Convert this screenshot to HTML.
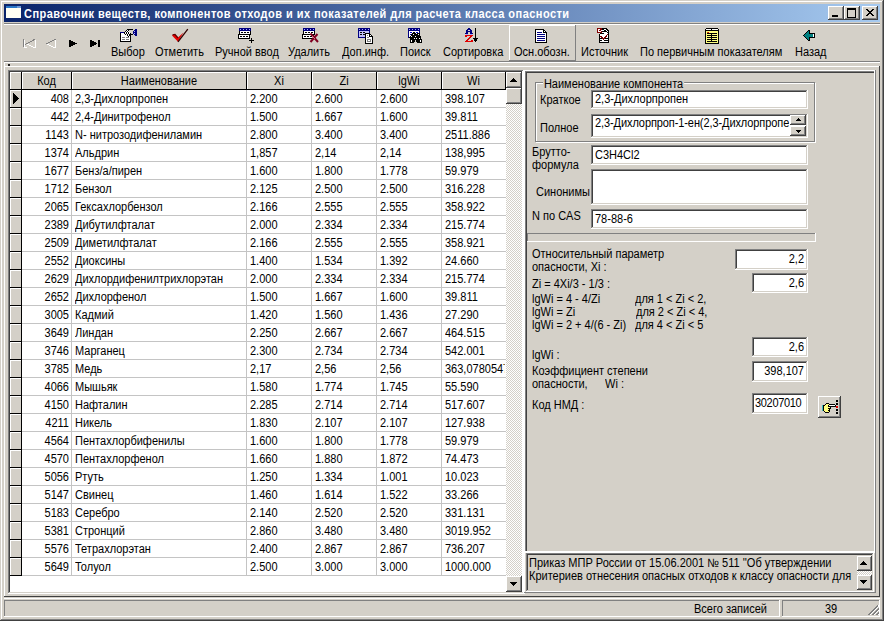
<!DOCTYPE html>
<html><head><meta charset="utf-8"><style>
html,body{margin:0;padding:0;}
body{width:884px;height:621px;position:relative;overflow:hidden;background:#D4D0C8;font-family:"Liberation Sans",sans-serif;font-size:11px;color:#000;}
body>div,body>span,body>svg{position:absolute;box-sizing:border-box;}
body>div{box-sizing:content-box;}
.t{white-space:pre;line-height:13px;height:13px;font-size:12px;transform:scaleX(0.9167);transform-origin:0 0;}
.t.r{transform-origin:100% 0;}
.t.c{transform-origin:50% 0;}
</style></head><body>
<div style="left:0px;top:0px;width:884px;height:1px;background:#D4D0C8;"></div>
<div style="left:1px;top:1px;width:882px;height:1px;background:#FFFFFF;"></div>
<div style="left:1px;top:1px;width:1px;height:619px;background:#FFFFFF;"></div>
<div style="left:882px;top:1px;width:1px;height:619px;background:#808080;"></div>
<div style="left:1px;top:619px;width:882px;height:1px;background:#808080;"></div>
<div style="left:883px;top:0px;width:1px;height:621px;background:#404040;"></div>
<div style="left:0px;top:620px;width:884px;height:1px;background:#404040;"></div>
<div style="left:4px;top:4px;width:876px;height:18px;background:linear-gradient(to right,#0A246A,#A6CAF0);"></div>
<svg style="left:6px;top:6px" width="15" height="12" viewBox="0 0 15 12" shape-rendering="crispEdges"><rect x="0" y="2" width="15" height="10" fill="#FFFFF4"/><rect x="0" y="0" width="11" height="2" fill="#2A78C8"/><rect x="11" y="0" width="4" height="2" fill="#6A9ADA"/></svg>
<span class="t" style="left:24px;top:8px;color:#fff;font-weight:bold;letter-spacing:0.50px;">Справочник веществ, компонентов отходов и их показателей для расчета класса опасности</span>
<div style="left:828px;top:6px;width:16px;height:14px;background:#D4D0C8;"></div>
<div style="left:828px;top:6px;width:16px;height:1px;background:#FFFFFF;"></div>
<div style="left:828px;top:6px;width:1px;height:14px;background:#FFFFFF;"></div>
<div style="left:828px;top:19px;width:16px;height:1px;background:#404040;"></div>
<div style="left:843px;top:6px;width:1px;height:14px;background:#404040;"></div>
<div style="left:829px;top:18px;width:14px;height:1px;background:#808080;"></div>
<div style="left:842px;top:7px;width:1px;height:12px;background:#808080;"></div>
<div style="left:844px;top:6px;width:16px;height:14px;background:#D4D0C8;"></div>
<div style="left:844px;top:6px;width:16px;height:1px;background:#FFFFFF;"></div>
<div style="left:844px;top:6px;width:1px;height:14px;background:#FFFFFF;"></div>
<div style="left:844px;top:19px;width:16px;height:1px;background:#404040;"></div>
<div style="left:859px;top:6px;width:1px;height:14px;background:#404040;"></div>
<div style="left:845px;top:18px;width:14px;height:1px;background:#808080;"></div>
<div style="left:858px;top:7px;width:1px;height:12px;background:#808080;"></div>
<div style="left:862px;top:6px;width:16px;height:14px;background:#D4D0C8;"></div>
<div style="left:862px;top:6px;width:16px;height:1px;background:#FFFFFF;"></div>
<div style="left:862px;top:6px;width:1px;height:14px;background:#FFFFFF;"></div>
<div style="left:862px;top:19px;width:16px;height:1px;background:#404040;"></div>
<div style="left:877px;top:6px;width:1px;height:14px;background:#404040;"></div>
<div style="left:863px;top:18px;width:14px;height:1px;background:#808080;"></div>
<div style="left:876px;top:7px;width:1px;height:12px;background:#808080;"></div>
<div style="left:832px;top:15px;width:6px;height:2px;background:#000;"></div>
<div style="left:847px;top:8px;width:7px;height:7px;border:1px solid #000;border-top-width:2px;"></div>
<svg style="left:866px;top:9px" width="8" height="7" viewBox="0 0 8 7" shape-rendering="crispEdges"><path d="M0 0h2v1h1v1h2v-1h1v-1h2v1h-1v1h-1v1h-1v1h1v1h1v1h1v1h-2v-1h-1v-1h-2v1h-1v1h-2v-1h1v-1h1v-1h1v-1h-1v-1h-1v-1h-1z" fill="#000"/></svg>
<div style="left:4px;top:23px;width:876px;height:1px;background:#808080;"></div>
<div style="left:4px;top:24px;width:876px;height:1px;background:#FFFFFF;"></div>
<div style="left:4px;top:61px;width:876px;height:1px;background:#808080;"></div>
<div style="left:4px;top:62px;width:876px;height:1px;background:#FFFFFF;"></div>
<div style="left:509px;top:25px;width:67px;height:36px;background:#D4D0C8;"></div>
<div style="left:509px;top:25px;width:67px;height:1px;background:#FFFFFF;"></div>
<div style="left:509px;top:25px;width:1px;height:36px;background:#FFFFFF;"></div>
<div style="left:509px;top:60px;width:67px;height:1px;background:#808080;"></div>
<div style="left:575px;top:25px;width:1px;height:36px;background:#808080;"></div>
<span class="t" style="left:111px;top:46px;">Выбор</span>
<span class="t" style="left:155px;top:46px;">Отметить</span>
<span class="t" style="left:215px;top:46px;">Ручной ввод</span>
<span class="t" style="left:288px;top:46px;">Удалить</span>
<span class="t" style="left:342px;top:46px;">Доп.инф.</span>
<span class="t" style="left:400px;top:46px;">Поиск</span>
<span class="t" style="left:443px;top:46px;">Сортировка</span>
<span class="t" style="left:514px;top:46px;">Осн.обозн.</span>
<span class="t" style="left:581px;top:46px;">Источник</span>
<span class="t" style="left:640px;top:46px;">По первичным показателям</span>
<span class="t" style="left:795px;top:46px;">Назад</span>
<svg style="left:23px;top:39px" width="13" height="9" viewBox="0 0 13 9" shape-rendering="crispEdges"><rect x="0" y="0" width="1" height="1" fill="#808080"/><rect x="10" y="0" width="2" height="1" fill="#808080"/><rect x="0" y="1" width="1" height="1" fill="#808080"/><rect x="1" y="1" width="1" height="1" fill="#FFFFFF"/><rect x="9" y="1" width="2" height="1" fill="#808080"/><rect x="12" y="1" width="1" height="1" fill="#FFFFFF"/><rect x="0" y="2" width="1" height="1" fill="#808080"/><rect x="1" y="2" width="1" height="1" fill="#FFFFFF"/><rect x="7" y="2" width="2" height="1" fill="#808080"/><rect x="12" y="2" width="1" height="1" fill="#FFFFFF"/><rect x="0" y="3" width="1" height="1" fill="#808080"/><rect x="1" y="3" width="1" height="1" fill="#FFFFFF"/><rect x="5" y="3" width="2" height="1" fill="#808080"/><rect x="12" y="3" width="1" height="1" fill="#FFFFFF"/><rect x="0" y="4" width="1" height="1" fill="#808080"/><rect x="1" y="4" width="1" height="1" fill="#FFFFFF"/><rect x="3" y="4" width="2" height="1" fill="#808080"/><rect x="12" y="4" width="1" height="1" fill="#FFFFFF"/><rect x="0" y="5" width="1" height="1" fill="#808080"/><rect x="1" y="5" width="1" height="1" fill="#FFFFFF"/><rect x="2" y="5" width="1" height="1" fill="#808080"/><rect x="4" y="5" width="2" height="1" fill="#FFFFFF"/><rect x="12" y="5" width="1" height="1" fill="#FFFFFF"/><rect x="0" y="6" width="1" height="1" fill="#808080"/><rect x="1" y="6" width="1" height="1" fill="#FFFFFF"/><rect x="6" y="6" width="2" height="1" fill="#FFFFFF"/><rect x="12" y="6" width="1" height="1" fill="#FFFFFF"/><rect x="0" y="7" width="1" height="1" fill="#808080"/><rect x="1" y="7" width="1" height="1" fill="#FFFFFF"/><rect x="8" y="7" width="2" height="1" fill="#FFFFFF"/><rect x="12" y="7" width="1" height="1" fill="#FFFFFF"/><rect x="1" y="8" width="3" height="1" fill="#FFFFFF"/><rect x="10" y="8" width="3" height="1" fill="#FFFFFF"/></svg>
<svg style="left:46px;top:39px" width="10" height="9" viewBox="0 0 10 9" shape-rendering="crispEdges"><rect x="8" y="0" width="2" height="1" fill="#808080"/><rect x="6" y="1" width="2" height="1" fill="#808080"/><rect x="9" y="1" width="1" height="1" fill="#FFFFFF"/><rect x="4" y="2" width="2" height="1" fill="#808080"/><rect x="9" y="2" width="1" height="1" fill="#FFFFFF"/><rect x="2" y="3" width="2" height="1" fill="#808080"/><rect x="9" y="3" width="1" height="1" fill="#FFFFFF"/><rect x="0" y="4" width="2" height="1" fill="#808080"/><rect x="9" y="4" width="1" height="1" fill="#FFFFFF"/><rect x="1" y="5" width="2" height="1" fill="#FFFFFF"/><rect x="9" y="5" width="1" height="1" fill="#FFFFFF"/><rect x="3" y="6" width="2" height="1" fill="#FFFFFF"/><rect x="9" y="6" width="1" height="1" fill="#FFFFFF"/><rect x="5" y="7" width="2" height="1" fill="#FFFFFF"/><rect x="9" y="7" width="1" height="1" fill="#FFFFFF"/><rect x="7" y="8" width="3" height="1" fill="#FFFFFF"/></svg>
<svg style="left:69px;top:40px" width="8" height="7" viewBox="0 0 8 7" shape-rendering="crispEdges"><rect x="0" y="0" width="2" height="1" fill="#000000"/><rect x="0" y="1" width="4" height="1" fill="#000000"/><rect x="0" y="2" width="6" height="1" fill="#000000"/><rect x="0" y="3" width="8" height="1" fill="#000000"/><rect x="0" y="4" width="6" height="1" fill="#000000"/><rect x="0" y="5" width="4" height="1" fill="#000000"/><rect x="0" y="6" width="2" height="1" fill="#000000"/></svg>
<svg style="left:90px;top:40px" width="10" height="7" viewBox="0 0 10 7" shape-rendering="crispEdges"><rect x="0" y="0" width="2" height="1" fill="#000000"/><rect x="8" y="0" width="2" height="1" fill="#000000"/><rect x="0" y="1" width="4" height="1" fill="#000000"/><rect x="8" y="1" width="2" height="1" fill="#000000"/><rect x="0" y="2" width="6" height="1" fill="#000000"/><rect x="8" y="2" width="2" height="1" fill="#000000"/><rect x="0" y="3" width="7" height="1" fill="#000000"/><rect x="8" y="3" width="2" height="1" fill="#000000"/><rect x="0" y="4" width="6" height="1" fill="#000000"/><rect x="8" y="4" width="2" height="1" fill="#000000"/><rect x="0" y="5" width="4" height="1" fill="#000000"/><rect x="8" y="5" width="2" height="1" fill="#000000"/><rect x="0" y="6" width="2" height="1" fill="#000000"/><rect x="8" y="6" width="2" height="1" fill="#000000"/></svg>
<svg style="left:120px;top:29px" width="17" height="13" viewBox="0 0 17 13" shape-rendering="crispEdges"><rect x="7" y="0" width="6" height="1" fill="#000000"/><rect x="15" y="0" width="2" height="1" fill="#000080"/><rect x="6" y="1" width="1" height="1" fill="#000000"/><rect x="7" y="1" width="1" height="1" fill="#FFFFFF"/><rect x="8" y="1" width="1" height="1" fill="#000000"/><rect x="14" y="1" width="3" height="1" fill="#000080"/><rect x="5" y="2" width="1" height="1" fill="#000000"/><rect x="6" y="2" width="1" height="1" fill="#FFFFFF"/><rect x="7" y="2" width="1" height="1" fill="#000000"/><rect x="8" y="2" width="1" height="1" fill="#FFFFFF"/><rect x="13" y="2" width="1" height="1" fill="#000080"/><rect x="14" y="2" width="1" height="1" fill="#A8A8FF"/><rect x="15" y="2" width="2" height="1" fill="#000080"/><rect x="0" y="3" width="4" height="1" fill="#000080"/><rect x="4" y="3" width="1" height="1" fill="#000000"/><rect x="5" y="3" width="1" height="1" fill="#FFFFFF"/><rect x="6" y="3" width="1" height="1" fill="#000000"/><rect x="7" y="3" width="1" height="1" fill="#FFFFFF"/><rect x="8" y="3" width="1" height="1" fill="#000000"/><rect x="9" y="3" width="1" height="1" fill="#FFFFFF"/><rect x="13" y="3" width="4" height="1" fill="#000080"/><rect x="0" y="4" width="1" height="1" fill="#000000"/><rect x="1" y="4" width="3" height="1" fill="#FFFFFF"/><rect x="4" y="4" width="1" height="1" fill="#000000"/><rect x="5" y="4" width="1" height="1" fill="#FFFFFF"/><rect x="6" y="4" width="1" height="1" fill="#000000"/><rect x="7" y="4" width="1" height="1" fill="#FFFFFF"/><rect x="8" y="4" width="1" height="1" fill="#000000"/><rect x="9" y="4" width="1" height="1" fill="#FFFFFF"/><rect x="10" y="4" width="1" height="1" fill="#000000"/><rect x="13" y="4" width="1" height="1" fill="#000080"/><rect x="14" y="4" width="1" height="1" fill="#A8A8FF"/><rect x="15" y="4" width="2" height="1" fill="#000080"/><rect x="0" y="5" width="1" height="1" fill="#000000"/><rect x="1" y="5" width="4" height="1" fill="#FFFFFF"/><rect x="5" y="5" width="1" height="1" fill="#000000"/><rect x="6" y="5" width="1" height="1" fill="#FFFFFF"/><rect x="7" y="5" width="1" height="1" fill="#000000"/><rect x="8" y="5" width="1" height="1" fill="#FFFFFF"/><rect x="9" y="5" width="4" height="1" fill="#000000"/><rect x="14" y="5" width="3" height="1" fill="#000080"/><rect x="0" y="6" width="1" height="1" fill="#000000"/><rect x="1" y="6" width="6" height="1" fill="#FFFFFF"/><rect x="7" y="6" width="1" height="1" fill="#000000"/><rect x="8" y="6" width="1" height="1" fill="#FFFFFF"/><rect x="9" y="6" width="2" height="1" fill="#000000"/><rect x="15" y="6" width="2" height="1" fill="#000080"/><rect x="0" y="7" width="1" height="1" fill="#000000"/><rect x="1" y="7" width="7" height="1" fill="#FFFFFF"/><rect x="8" y="7" width="1" height="1" fill="#000000"/><rect x="9" y="7" width="1" height="1" fill="#FFFFFF"/><rect x="10" y="7" width="1" height="1" fill="#000000"/><rect x="0" y="8" width="1" height="1" fill="#000000"/><rect x="1" y="8" width="1" height="1" fill="#FFFFFF"/><rect x="2" y="8" width="3" height="1" fill="#808080"/><rect x="5" y="8" width="1" height="1" fill="#FFFFFF"/><rect x="6" y="8" width="3" height="1" fill="#808080"/><rect x="9" y="8" width="1" height="1" fill="#FFFFFF"/><rect x="10" y="8" width="1" height="1" fill="#000000"/><rect x="0" y="9" width="1" height="1" fill="#000000"/><rect x="1" y="9" width="9" height="1" fill="#FFFFFF"/><rect x="10" y="9" width="1" height="1" fill="#000000"/><rect x="0" y="10" width="1" height="1" fill="#000000"/><rect x="1" y="10" width="1" height="1" fill="#FFFFFF"/><rect x="2" y="10" width="3" height="1" fill="#808080"/><rect x="5" y="10" width="1" height="1" fill="#FFFFFF"/><rect x="6" y="10" width="3" height="1" fill="#808080"/><rect x="9" y="10" width="1" height="1" fill="#FFFFFF"/><rect x="10" y="10" width="1" height="1" fill="#000000"/><rect x="0" y="11" width="1" height="1" fill="#000000"/><rect x="1" y="11" width="9" height="1" fill="#FFFFFF"/><rect x="10" y="11" width="1" height="1" fill="#000000"/><rect x="0" y="12" width="11" height="1" fill="#000000"/></svg>
<svg style="left:171px;top:28px" width="18" height="15" viewBox="0 0 18 15" shape-rendering="crispEdges"><path d="M1 7.5 L3.5 6 L7 9.5 L12.5 4.5 L7 13.8 Z" fill="#E80000" shape-rendering="geometricPrecision"/><path d="M1.5 6.8 L4 6.5 L7 10" stroke="#600000" stroke-width="1.2" fill="none" shape-rendering="geometricPrecision"/><path d="M7 13.8 L16.8 1.2" stroke="#300000" stroke-width="1.3" fill="none" shape-rendering="geometricPrecision"/></svg>
<svg style="left:238px;top:28px" width="17" height="15" viewBox="0 0 17 15" shape-rendering="crispEdges"><rect x="1" y="0" width="12" height="1" fill="#000080"/><rect x="1" y="1" width="1" height="1" fill="#000080"/><rect x="2" y="1" width="1" height="1" fill="#A8A8FF"/><rect x="3" y="1" width="2" height="1" fill="#000080"/><rect x="5" y="1" width="1" height="1" fill="#A8A8FF"/><rect x="6" y="1" width="2" height="1" fill="#000080"/><rect x="8" y="1" width="1" height="1" fill="#A8A8FF"/><rect x="9" y="1" width="2" height="1" fill="#000080"/><rect x="11" y="1" width="1" height="1" fill="#A8A8FF"/><rect x="12" y="1" width="1" height="1" fill="#000080"/><rect x="1" y="2" width="12" height="1" fill="#000080"/><rect x="1" y="3" width="1" height="1" fill="#000000"/><rect x="2" y="3" width="10" height="1" fill="#FFFFFF"/><rect x="12" y="3" width="1" height="1" fill="#000000"/><rect x="1" y="4" width="1" height="1" fill="#000000"/><rect x="2" y="4" width="1" height="1" fill="#FFFFFF"/><rect x="3" y="4" width="2" height="1" fill="#000000"/><rect x="5" y="4" width="1" height="1" fill="#FFFFFF"/><rect x="6" y="4" width="2" height="1" fill="#000000"/><rect x="8" y="4" width="1" height="1" fill="#FFFFFF"/><rect x="9" y="4" width="2" height="1" fill="#000000"/><rect x="11" y="4" width="1" height="1" fill="#FFFFFF"/><rect x="12" y="4" width="1" height="1" fill="#000000"/><rect x="1" y="5" width="1" height="1" fill="#000000"/><rect x="2" y="5" width="10" height="1" fill="#FFFFFF"/><rect x="12" y="5" width="1" height="1" fill="#000000"/><rect x="0" y="6" width="13" height="1" fill="#000000"/><rect x="0" y="7" width="1" height="1" fill="#000000"/><rect x="1" y="7" width="10" height="1" fill="#FFFFFF"/><rect x="11" y="7" width="1" height="1" fill="#000000"/><rect x="0" y="8" width="1" height="1" fill="#000000"/><rect x="1" y="8" width="1" height="1" fill="#FFFFFF"/><rect x="2" y="8" width="2" height="1" fill="#000000"/><rect x="4" y="8" width="1" height="1" fill="#FFFFFF"/><rect x="5" y="8" width="2" height="1" fill="#000000"/><rect x="7" y="8" width="1" height="1" fill="#FFFFFF"/><rect x="8" y="8" width="2" height="1" fill="#000000"/><rect x="10" y="8" width="1" height="1" fill="#FFFFFF"/><rect x="11" y="8" width="1" height="1" fill="#000000"/><rect x="0" y="9" width="1" height="1" fill="#000000"/><rect x="1" y="9" width="10" height="1" fill="#FFFFFF"/><rect x="11" y="9" width="1" height="1" fill="#000000"/><rect x="0" y="10" width="12" height="1" fill="#000000"/><rect x="13" y="11" width="1" height="1" fill="#000000"/><rect x="11" y="12" width="5" height="1" fill="#000000"/><rect x="13" y="13" width="1" height="1" fill="#000000"/><rect x="13" y="14" width="1" height="1" fill="#000000"/></svg>
<svg style="left:238px;top:38px" width="17" height="1" viewBox="0 0 17 1" shape-rendering="crispEdges"><rect x="13" y="0" width="1" height="1" fill="#000000"/></svg>
<svg style="left:302px;top:28px" width="17" height="11" viewBox="0 0 17 11" shape-rendering="crispEdges"><rect x="1" y="0" width="12" height="1" fill="#000080"/><rect x="1" y="1" width="1" height="1" fill="#000080"/><rect x="2" y="1" width="1" height="1" fill="#A8A8FF"/><rect x="3" y="1" width="2" height="1" fill="#000080"/><rect x="5" y="1" width="1" height="1" fill="#A8A8FF"/><rect x="6" y="1" width="2" height="1" fill="#000080"/><rect x="8" y="1" width="1" height="1" fill="#A8A8FF"/><rect x="9" y="1" width="2" height="1" fill="#000080"/><rect x="11" y="1" width="1" height="1" fill="#A8A8FF"/><rect x="12" y="1" width="1" height="1" fill="#000080"/><rect x="1" y="2" width="12" height="1" fill="#000080"/><rect x="1" y="3" width="1" height="1" fill="#000000"/><rect x="2" y="3" width="10" height="1" fill="#FFFFFF"/><rect x="12" y="3" width="1" height="1" fill="#000000"/><rect x="1" y="4" width="1" height="1" fill="#000000"/><rect x="2" y="4" width="1" height="1" fill="#FFFFFF"/><rect x="3" y="4" width="2" height="1" fill="#000000"/><rect x="5" y="4" width="1" height="1" fill="#FFFFFF"/><rect x="6" y="4" width="2" height="1" fill="#000000"/><rect x="8" y="4" width="1" height="1" fill="#FFFFFF"/><rect x="9" y="4" width="2" height="1" fill="#000000"/><rect x="11" y="4" width="1" height="1" fill="#FFFFFF"/><rect x="12" y="4" width="1" height="1" fill="#000000"/><rect x="1" y="5" width="1" height="1" fill="#000000"/><rect x="2" y="5" width="10" height="1" fill="#FFFFFF"/><rect x="12" y="5" width="1" height="1" fill="#000000"/><rect x="0" y="6" width="13" height="1" fill="#000000"/><rect x="0" y="7" width="1" height="1" fill="#000000"/><rect x="1" y="7" width="10" height="1" fill="#FFFFFF"/><rect x="11" y="7" width="1" height="1" fill="#000000"/><rect x="0" y="8" width="1" height="1" fill="#000000"/><rect x="1" y="8" width="1" height="1" fill="#FFFFFF"/><rect x="2" y="8" width="2" height="1" fill="#000000"/><rect x="4" y="8" width="1" height="1" fill="#FFFFFF"/><rect x="5" y="8" width="2" height="1" fill="#000000"/><rect x="7" y="8" width="1" height="1" fill="#FFFFFF"/><rect x="8" y="8" width="2" height="1" fill="#000000"/><rect x="10" y="8" width="1" height="1" fill="#FFFFFF"/><rect x="11" y="8" width="1" height="1" fill="#000000"/><rect x="0" y="9" width="1" height="1" fill="#000000"/><rect x="1" y="9" width="10" height="1" fill="#FFFFFF"/><rect x="11" y="9" width="1" height="1" fill="#000000"/><rect x="0" y="10" width="12" height="1" fill="#000000"/></svg>
<svg style="left:302px;top:28px" width="18" height="16" viewBox="0 0 18 16" shape-rendering="crispEdges"><path d="M8.5 5.5 L16 14 M15.5 6 L8.5 14" stroke="#800020" stroke-width="2" fill="none" shape-rendering="geometricPrecision"/><path d="M10 8 L13 11" stroke="#FF80A0" stroke-width="0.8" shape-rendering="geometricPrecision"/></svg>
<svg style="left:358px;top:28px" width="17" height="16" viewBox="0 0 17 16" shape-rendering="crispEdges"><rect x="0" y="0" width="12" height="1" fill="#000080"/><rect x="0" y="1" width="1" height="1" fill="#000080"/><rect x="1" y="1" width="1" height="1" fill="#A8A8FF"/><rect x="2" y="1" width="2" height="1" fill="#000080"/><rect x="4" y="1" width="1" height="1" fill="#A8A8FF"/><rect x="5" y="1" width="2" height="1" fill="#000080"/><rect x="7" y="1" width="1" height="1" fill="#A8A8FF"/><rect x="8" y="1" width="2" height="1" fill="#000080"/><rect x="10" y="1" width="1" height="1" fill="#A8A8FF"/><rect x="11" y="1" width="1" height="1" fill="#000080"/><rect x="0" y="2" width="12" height="1" fill="#000080"/><rect x="0" y="3" width="1" height="1" fill="#000080"/><rect x="1" y="3" width="10" height="1" fill="#C0C0F8"/><rect x="11" y="3" width="1" height="1" fill="#000080"/><rect x="0" y="4" width="1" height="1" fill="#000080"/><rect x="1" y="4" width="1" height="1" fill="#C0C0F8"/><rect x="2" y="4" width="2" height="1" fill="#000000"/><rect x="4" y="4" width="1" height="1" fill="#C0C0F8"/><rect x="5" y="4" width="2" height="1" fill="#000000"/><rect x="7" y="4" width="4" height="1" fill="#C0C0F8"/><rect x="11" y="4" width="1" height="1" fill="#000080"/><rect x="0" y="5" width="1" height="1" fill="#000080"/><rect x="1" y="5" width="6" height="1" fill="#C0C0F8"/><rect x="7" y="5" width="5" height="1" fill="#000000"/><rect x="0" y="6" width="1" height="1" fill="#000080"/><rect x="1" y="6" width="1" height="1" fill="#C0C0F8"/><rect x="2" y="6" width="2" height="1" fill="#000000"/><rect x="4" y="6" width="1" height="1" fill="#C0C0F8"/><rect x="5" y="6" width="3" height="1" fill="#000000"/><rect x="8" y="6" width="3" height="1" fill="#FFFFFF"/><rect x="11" y="6" width="2" height="1" fill="#000000"/><rect x="0" y="7" width="1" height="1" fill="#000080"/><rect x="1" y="7" width="6" height="1" fill="#C0C0F8"/><rect x="7" y="7" width="1" height="1" fill="#000000"/><rect x="8" y="7" width="1" height="1" fill="#FFFFFF"/><rect x="9" y="7" width="1" height="1" fill="#808080"/><rect x="10" y="7" width="1" height="1" fill="#FFFFFF"/><rect x="11" y="7" width="1" height="1" fill="#000000"/><rect x="12" y="7" width="1" height="1" fill="#FFFFFF"/><rect x="13" y="7" width="1" height="1" fill="#000000"/><rect x="0" y="8" width="1" height="1" fill="#000080"/><rect x="1" y="8" width="6" height="1" fill="#C0C0F8"/><rect x="7" y="8" width="1" height="1" fill="#000000"/><rect x="8" y="8" width="3" height="1" fill="#FFFFFF"/><rect x="11" y="8" width="4" height="1" fill="#000000"/><rect x="0" y="9" width="7" height="1" fill="#000080"/><rect x="7" y="9" width="1" height="1" fill="#000000"/><rect x="8" y="9" width="1" height="1" fill="#FFFFFF"/><rect x="9" y="9" width="2" height="1" fill="#808080"/><rect x="11" y="9" width="3" height="1" fill="#FFFFFF"/><rect x="14" y="9" width="1" height="1" fill="#000000"/><rect x="7" y="10" width="1" height="1" fill="#000000"/><rect x="8" y="10" width="6" height="1" fill="#FFFFFF"/><rect x="14" y="10" width="1" height="1" fill="#000000"/><rect x="7" y="11" width="1" height="1" fill="#000000"/><rect x="8" y="11" width="1" height="1" fill="#FFFFFF"/><rect x="9" y="11" width="4" height="1" fill="#808080"/><rect x="13" y="11" width="1" height="1" fill="#FFFFFF"/><rect x="14" y="11" width="1" height="1" fill="#000000"/><rect x="7" y="12" width="1" height="1" fill="#000000"/><rect x="8" y="12" width="1" height="1" fill="#FFFFFF"/><rect x="9" y="12" width="1" height="1" fill="#808080"/><rect x="10" y="12" width="2" height="1" fill="#FFFFFF"/><rect x="12" y="12" width="1" height="1" fill="#808080"/><rect x="13" y="12" width="1" height="1" fill="#FFFFFF"/><rect x="14" y="12" width="1" height="1" fill="#000000"/><rect x="7" y="13" width="1" height="1" fill="#000000"/><rect x="8" y="13" width="1" height="1" fill="#FFFFFF"/><rect x="9" y="13" width="4" height="1" fill="#808080"/><rect x="13" y="13" width="1" height="1" fill="#FFFFFF"/><rect x="14" y="13" width="1" height="1" fill="#000000"/><rect x="7" y="14" width="1" height="1" fill="#000000"/><rect x="8" y="14" width="6" height="1" fill="#FFFFFF"/><rect x="14" y="14" width="1" height="1" fill="#000000"/><rect x="7" y="15" width="8" height="1" fill="#000000"/></svg>
<svg style="left:408px;top:28px" width="17" height="15" viewBox="0 0 17 15" shape-rendering="crispEdges"><rect x="0" y="0" width="12" height="1" fill="#000080"/><rect x="0" y="1" width="1" height="1" fill="#000080"/><rect x="1" y="1" width="1" height="1" fill="#A8A8FF"/><rect x="2" y="1" width="2" height="1" fill="#000080"/><rect x="4" y="1" width="1" height="1" fill="#A8A8FF"/><rect x="5" y="1" width="2" height="1" fill="#000080"/><rect x="7" y="1" width="1" height="1" fill="#A8A8FF"/><rect x="8" y="1" width="2" height="1" fill="#000080"/><rect x="10" y="1" width="1" height="1" fill="#A8A8FF"/><rect x="11" y="1" width="1" height="1" fill="#000080"/><rect x="0" y="2" width="12" height="1" fill="#000080"/><rect x="0" y="3" width="1" height="1" fill="#000080"/><rect x="1" y="3" width="10" height="1" fill="#FFFFFF"/><rect x="11" y="3" width="1" height="1" fill="#000080"/><rect x="0" y="4" width="1" height="1" fill="#000080"/><rect x="1" y="4" width="1" height="1" fill="#FFFFFF"/><rect x="2" y="4" width="2" height="1" fill="#0000C0"/><rect x="4" y="4" width="1" height="1" fill="#FFFFFF"/><rect x="5" y="4" width="2" height="1" fill="#000000"/><rect x="7" y="4" width="1" height="1" fill="#FFFFFF"/><rect x="8" y="4" width="2" height="1" fill="#0000C0"/><rect x="10" y="4" width="1" height="1" fill="#FFFFFF"/><rect x="11" y="4" width="1" height="1" fill="#000080"/><rect x="0" y="5" width="1" height="1" fill="#000080"/><rect x="1" y="5" width="3" height="1" fill="#FFFFFF"/><rect x="4" y="5" width="4" height="1" fill="#000000"/><rect x="8" y="5" width="1" height="1" fill="#FFFFFF"/><rect x="9" y="5" width="3" height="1" fill="#000000"/><rect x="0" y="6" width="1" height="1" fill="#000080"/><rect x="1" y="6" width="1" height="1" fill="#FFFFFF"/><rect x="2" y="6" width="1" height="1" fill="#0000C0"/><rect x="3" y="6" width="2" height="1" fill="#000000"/><rect x="5" y="6" width="1" height="1" fill="#FFFFFF"/><rect x="6" y="6" width="4" height="1" fill="#000000"/><rect x="10" y="6" width="1" height="1" fill="#FFFFFF"/><rect x="11" y="6" width="1" height="1" fill="#000000"/><rect x="0" y="7" width="1" height="1" fill="#000080"/><rect x="1" y="7" width="2" height="1" fill="#FFFFFF"/><rect x="3" y="7" width="9" height="1" fill="#000000"/><rect x="0" y="8" width="1" height="1" fill="#000080"/><rect x="1" y="8" width="1" height="1" fill="#FFFFFF"/><rect x="2" y="8" width="1" height="1" fill="#000000"/><rect x="3" y="8" width="1" height="1" fill="#FFFFFF"/><rect x="4" y="8" width="3" height="1" fill="#000000"/><rect x="7" y="8" width="1" height="1" fill="#FFFFFF"/><rect x="8" y="8" width="5" height="1" fill="#000000"/><rect x="0" y="9" width="1" height="1" fill="#000080"/><rect x="1" y="9" width="12" height="1" fill="#000000"/><rect x="2" y="10" width="4" height="1" fill="#000000"/><rect x="6" y="10" width="1" height="1" fill="#FFFFFF"/><rect x="7" y="10" width="1" height="1" fill="#000000"/><rect x="8" y="10" width="1" height="1" fill="#FFFFFF"/><rect x="9" y="10" width="2" height="1" fill="#000000"/><rect x="11" y="10" width="1" height="1" fill="#FFFFFF"/><rect x="12" y="10" width="1" height="1" fill="#000000"/><rect x="2" y="11" width="12" height="1" fill="#000000"/><rect x="2" y="12" width="1" height="1" fill="#000000"/><rect x="3" y="12" width="1" height="1" fill="#FFFFFF"/><rect x="4" y="12" width="3" height="1" fill="#000000"/><rect x="8" y="12" width="4" height="1" fill="#000000"/><rect x="12" y="12" width="1" height="1" fill="#FFFFFF"/><rect x="13" y="12" width="1" height="1" fill="#000000"/><rect x="2" y="13" width="1" height="1" fill="#000000"/><rect x="3" y="13" width="1" height="1" fill="#FFFFFF"/><rect x="4" y="13" width="3" height="1" fill="#000000"/><rect x="8" y="13" width="4" height="1" fill="#000000"/><rect x="12" y="13" width="1" height="1" fill="#FFFFFF"/><rect x="13" y="13" width="1" height="1" fill="#000000"/><rect x="2" y="14" width="4" height="1" fill="#000000"/><rect x="9" y="14" width="5" height="1" fill="#000000"/></svg>
<svg style="left:465px;top:28px" width="13" height="14" viewBox="0 0 13 14" shape-rendering="crispEdges"><rect x="3" y="0" width="2" height="1" fill="#000080"/><rect x="10" y="0" width="1" height="1" fill="#000000"/><rect x="2" y="1" width="4" height="1" fill="#000080"/><rect x="10" y="1" width="1" height="1" fill="#000000"/><rect x="1" y="2" width="2" height="1" fill="#000080"/><rect x="5" y="2" width="2" height="1" fill="#000080"/><rect x="10" y="2" width="1" height="1" fill="#000000"/><rect x="1" y="3" width="6" height="1" fill="#000080"/><rect x="10" y="3" width="1" height="1" fill="#000000"/><rect x="1" y="4" width="2" height="1" fill="#000080"/><rect x="5" y="4" width="2" height="1" fill="#000080"/><rect x="10" y="4" width="1" height="1" fill="#000000"/><rect x="0" y="5" width="3" height="1" fill="#000080"/><rect x="5" y="5" width="3" height="1" fill="#000080"/><rect x="10" y="5" width="1" height="1" fill="#000000"/><rect x="1" y="6" width="2" height="1" fill="#A8A8FF"/><rect x="5" y="6" width="2" height="1" fill="#A8A8FF"/><rect x="10" y="6" width="1" height="1" fill="#000000"/><rect x="0" y="7" width="8" height="1" fill="#E00000"/><rect x="10" y="7" width="1" height="1" fill="#000000"/><rect x="0" y="8" width="2" height="1" fill="#E00000"/><rect x="5" y="8" width="2" height="1" fill="#E00000"/><rect x="10" y="8" width="1" height="1" fill="#000000"/><rect x="4" y="9" width="2" height="1" fill="#E00000"/><rect x="10" y="9" width="1" height="1" fill="#000000"/><rect x="3" y="10" width="2" height="1" fill="#E00000"/><rect x="8" y="10" width="5" height="1" fill="#000000"/><rect x="2" y="11" width="2" height="1" fill="#E00000"/><rect x="9" y="11" width="3" height="1" fill="#000000"/><rect x="1" y="12" width="2" height="1" fill="#E00000"/><rect x="6" y="12" width="2" height="1" fill="#E00000"/><rect x="9" y="12" width="3" height="1" fill="#000000"/><rect x="0" y="13" width="8" height="1" fill="#E00000"/><rect x="10" y="13" width="1" height="1" fill="#000000"/></svg>
<svg style="left:535px;top:29px" width="13" height="14" viewBox="0 0 13 14" shape-rendering="crispEdges"><rect x="0" y="0" width="9" height="1" fill="#000000"/><rect x="0" y="1" width="1" height="1" fill="#000000"/><rect x="1" y="1" width="7" height="1" fill="#FFFFFF"/><rect x="8" y="1" width="2" height="1" fill="#000000"/><rect x="0" y="2" width="1" height="1" fill="#000000"/><rect x="1" y="2" width="7" height="1" fill="#FFFFFF"/><rect x="8" y="2" width="1" height="1" fill="#000000"/><rect x="9" y="2" width="1" height="1" fill="#FFFFFF"/><rect x="10" y="2" width="1" height="1" fill="#000000"/><rect x="0" y="3" width="1" height="1" fill="#000000"/><rect x="1" y="3" width="1" height="1" fill="#FFFFFF"/><rect x="2" y="3" width="5" height="1" fill="#000080"/><rect x="7" y="3" width="1" height="1" fill="#FFFFFF"/><rect x="8" y="3" width="4" height="1" fill="#000000"/><rect x="0" y="4" width="1" height="1" fill="#000000"/><rect x="1" y="4" width="10" height="1" fill="#FFFFFF"/><rect x="11" y="4" width="1" height="1" fill="#000000"/><rect x="0" y="5" width="1" height="1" fill="#000000"/><rect x="1" y="5" width="1" height="1" fill="#FFFFFF"/><rect x="2" y="5" width="8" height="1" fill="#000080"/><rect x="10" y="5" width="1" height="1" fill="#FFFFFF"/><rect x="11" y="5" width="1" height="1" fill="#000000"/><rect x="0" y="6" width="1" height="1" fill="#000000"/><rect x="1" y="6" width="10" height="1" fill="#FFFFFF"/><rect x="11" y="6" width="1" height="1" fill="#000000"/><rect x="0" y="7" width="1" height="1" fill="#000000"/><rect x="1" y="7" width="1" height="1" fill="#FFFFFF"/><rect x="2" y="7" width="8" height="1" fill="#000080"/><rect x="10" y="7" width="1" height="1" fill="#FFFFFF"/><rect x="11" y="7" width="1" height="1" fill="#000000"/><rect x="0" y="8" width="1" height="1" fill="#000000"/><rect x="1" y="8" width="10" height="1" fill="#FFFFFF"/><rect x="11" y="8" width="1" height="1" fill="#000000"/><rect x="0" y="9" width="1" height="1" fill="#000000"/><rect x="1" y="9" width="1" height="1" fill="#FFFFFF"/><rect x="2" y="9" width="8" height="1" fill="#000080"/><rect x="10" y="9" width="1" height="1" fill="#FFFFFF"/><rect x="11" y="9" width="1" height="1" fill="#000000"/><rect x="0" y="10" width="1" height="1" fill="#000000"/><rect x="1" y="10" width="10" height="1" fill="#FFFFFF"/><rect x="11" y="10" width="1" height="1" fill="#000000"/><rect x="0" y="11" width="1" height="1" fill="#000000"/><rect x="1" y="11" width="1" height="1" fill="#FFFFFF"/><rect x="2" y="11" width="8" height="1" fill="#000080"/><rect x="10" y="11" width="1" height="1" fill="#FFFFFF"/><rect x="11" y="11" width="1" height="1" fill="#000000"/><rect x="0" y="12" width="1" height="1" fill="#000000"/><rect x="1" y="12" width="10" height="1" fill="#FFFFFF"/><rect x="11" y="12" width="1" height="1" fill="#000000"/><rect x="0" y="13" width="12" height="1" fill="#000000"/></svg>
<svg style="left:597px;top:28px" width="15" height="15" viewBox="0 0 15 15" shape-rendering="crispEdges"><rect x="0" y="0" width="5" height="1" fill="#800000"/><rect x="5" y="0" width="5" height="1" fill="#000000"/><rect x="0" y="1" width="1" height="1" fill="#800000"/><rect x="1" y="1" width="2" height="1" fill="#FFFFFF"/><rect x="3" y="1" width="2" height="1" fill="#800000"/><rect x="5" y="1" width="2" height="1" fill="#000000"/><rect x="7" y="1" width="2" height="1" fill="#FFFFFF"/><rect x="9" y="1" width="2" height="1" fill="#000000"/><rect x="0" y="2" width="1" height="1" fill="#800000"/><rect x="1" y="2" width="1" height="1" fill="#FFFFFF"/><rect x="2" y="2" width="2" height="1" fill="#800000"/><rect x="4" y="2" width="3" height="1" fill="#FFFFFF"/><rect x="7" y="2" width="2" height="1" fill="#000000"/><rect x="9" y="2" width="1" height="1" fill="#FFFFFF"/><rect x="10" y="2" width="2" height="1" fill="#000000"/><rect x="0" y="3" width="1" height="1" fill="#800000"/><rect x="1" y="3" width="3" height="1" fill="#FFFFFF"/><rect x="4" y="3" width="1" height="1" fill="#800000"/><rect x="5" y="3" width="5" height="1" fill="#000000"/><rect x="10" y="3" width="1" height="1" fill="#FFFFFF"/><rect x="11" y="3" width="1" height="1" fill="#000000"/><rect x="0" y="4" width="5" height="1" fill="#800000"/><rect x="5" y="4" width="5" height="1" fill="#FFFFFF"/><rect x="10" y="4" width="2" height="1" fill="#000000"/><rect x="3" y="5" width="4" height="1" fill="#000000"/><rect x="7" y="5" width="4" height="1" fill="#FFFFFF"/><rect x="11" y="5" width="1" height="1" fill="#000000"/><rect x="2" y="6" width="1" height="1" fill="#000000"/><rect x="3" y="6" width="7" height="1" fill="#FFFFFF"/><rect x="10" y="6" width="1" height="1" fill="#800000"/><rect x="11" y="6" width="1" height="1" fill="#000000"/><rect x="2" y="7" width="1" height="1" fill="#000000"/><rect x="3" y="7" width="6" height="1" fill="#FFFFFF"/><rect x="9" y="7" width="1" height="1" fill="#800000"/><rect x="10" y="7" width="1" height="1" fill="#FFFFFF"/><rect x="11" y="7" width="1" height="1" fill="#000000"/><rect x="2" y="8" width="1" height="1" fill="#000000"/><rect x="3" y="8" width="2" height="1" fill="#800000"/><rect x="5" y="8" width="3" height="1" fill="#FFFFFF"/><rect x="8" y="8" width="2" height="1" fill="#800000"/><rect x="10" y="8" width="1" height="1" fill="#FFFFFF"/><rect x="11" y="8" width="1" height="1" fill="#000000"/><rect x="2" y="9" width="1" height="1" fill="#000000"/><rect x="3" y="9" width="1" height="1" fill="#FFFFFF"/><rect x="4" y="9" width="2" height="1" fill="#800000"/><rect x="6" y="9" width="1" height="1" fill="#FFFFFF"/><rect x="7" y="9" width="2" height="1" fill="#800000"/><rect x="9" y="9" width="2" height="1" fill="#FFFFFF"/><rect x="11" y="9" width="1" height="1" fill="#000000"/><rect x="2" y="10" width="3" height="1" fill="#000000"/><rect x="5" y="10" width="3" height="1" fill="#800000"/><rect x="8" y="10" width="4" height="1" fill="#000000"/><rect x="2" y="11" width="1" height="1" fill="#000000"/><rect x="3" y="11" width="3" height="1" fill="#FFFFFF"/><rect x="6" y="11" width="1" height="1" fill="#800000"/><rect x="7" y="11" width="4" height="1" fill="#FFFFFF"/><rect x="11" y="11" width="1" height="1" fill="#000000"/><rect x="2" y="12" width="3" height="1" fill="#000000"/><rect x="5" y="12" width="2" height="1" fill="#FFFFFF"/><rect x="7" y="12" width="5" height="1" fill="#000000"/><rect x="2" y="13" width="1" height="1" fill="#000000"/><rect x="3" y="13" width="8" height="1" fill="#FFFFFF"/><rect x="11" y="13" width="1" height="1" fill="#000000"/><rect x="2" y="14" width="10" height="1" fill="#000000"/></svg>
<svg style="left:705px;top:28px" width="14" height="16" viewBox="0 0 14 16" shape-rendering="crispEdges"><rect x="1" y="0" width="12" height="1" fill="#000000"/><rect x="0" y="1" width="1" height="1" fill="#000000"/><rect x="1" y="1" width="5" height="1" fill="#FFFFFF"/><rect x="6" y="1" width="1" height="1" fill="#000000"/><rect x="7" y="1" width="6" height="1" fill="#FFFFFF"/><rect x="13" y="1" width="1" height="1" fill="#000000"/><rect x="0" y="2" width="14" height="1" fill="#000000"/><rect x="0" y="3" width="1" height="1" fill="#000000"/><rect x="1" y="3" width="12" height="1" fill="#FFFF80"/><rect x="13" y="3" width="1" height="1" fill="#000000"/><rect x="0" y="4" width="1" height="1" fill="#000000"/><rect x="1" y="4" width="1" height="1" fill="#FFFF80"/><rect x="2" y="4" width="1" height="1" fill="#C06000"/><rect x="3" y="4" width="1" height="1" fill="#E00000"/><rect x="4" y="4" width="9" height="1" fill="#FFFF80"/><rect x="13" y="4" width="1" height="1" fill="#000000"/><rect x="0" y="5" width="1" height="1" fill="#000000"/><rect x="1" y="5" width="1" height="1" fill="#FFFF80"/><rect x="2" y="5" width="10" height="1" fill="#000000"/><rect x="12" y="5" width="1" height="1" fill="#FFFF80"/><rect x="13" y="5" width="1" height="1" fill="#000000"/><rect x="0" y="6" width="1" height="1" fill="#000000"/><rect x="1" y="6" width="5" height="1" fill="#FFFF80"/><rect x="6" y="6" width="1" height="1" fill="#000000"/><rect x="7" y="6" width="6" height="1" fill="#FFFF80"/><rect x="13" y="6" width="1" height="1" fill="#000000"/><rect x="0" y="7" width="1" height="1" fill="#000000"/><rect x="1" y="7" width="1" height="1" fill="#FFFF80"/><rect x="2" y="7" width="10" height="1" fill="#000000"/><rect x="12" y="7" width="1" height="1" fill="#FFFF80"/><rect x="13" y="7" width="1" height="1" fill="#000000"/><rect x="0" y="8" width="1" height="1" fill="#000000"/><rect x="1" y="8" width="5" height="1" fill="#FFFF80"/><rect x="6" y="8" width="1" height="1" fill="#000000"/><rect x="7" y="8" width="6" height="1" fill="#FFFF80"/><rect x="13" y="8" width="1" height="1" fill="#000000"/><rect x="0" y="9" width="1" height="1" fill="#000000"/><rect x="1" y="9" width="1" height="1" fill="#FFFF80"/><rect x="2" y="9" width="10" height="1" fill="#000000"/><rect x="12" y="9" width="1" height="1" fill="#FFFF80"/><rect x="13" y="9" width="1" height="1" fill="#000000"/><rect x="0" y="10" width="1" height="1" fill="#000000"/><rect x="1" y="10" width="5" height="1" fill="#FFFF80"/><rect x="6" y="10" width="1" height="1" fill="#000000"/><rect x="7" y="10" width="6" height="1" fill="#FFFF80"/><rect x="13" y="10" width="1" height="1" fill="#000000"/><rect x="0" y="11" width="1" height="1" fill="#000000"/><rect x="1" y="11" width="1" height="1" fill="#FFFF80"/><rect x="2" y="11" width="10" height="1" fill="#000000"/><rect x="12" y="11" width="1" height="1" fill="#FFFF80"/><rect x="13" y="11" width="1" height="1" fill="#000000"/><rect x="0" y="12" width="1" height="1" fill="#000000"/><rect x="1" y="12" width="5" height="1" fill="#FFFF80"/><rect x="6" y="12" width="1" height="1" fill="#000000"/><rect x="7" y="12" width="6" height="1" fill="#FFFF80"/><rect x="13" y="12" width="1" height="1" fill="#000000"/><rect x="0" y="13" width="1" height="1" fill="#000000"/><rect x="1" y="13" width="1" height="1" fill="#FFFF80"/><rect x="2" y="13" width="10" height="1" fill="#000000"/><rect x="12" y="13" width="1" height="1" fill="#FFFF80"/><rect x="13" y="13" width="1" height="1" fill="#000000"/><rect x="0" y="14" width="1" height="1" fill="#000000"/><rect x="1" y="14" width="12" height="1" fill="#FFFF80"/><rect x="13" y="14" width="1" height="1" fill="#000000"/><rect x="0" y="15" width="14" height="1" fill="#000000"/></svg>
<svg style="left:803px;top:30px" width="12" height="11" viewBox="0 0 12 11" shape-rendering="crispEdges"><rect x="5" y="0" width="2" height="1" fill="#000000"/><rect x="4" y="1" width="1" height="1" fill="#000000"/><rect x="5" y="1" width="1" height="1" fill="#008080"/><rect x="6" y="1" width="1" height="1" fill="#000000"/><rect x="3" y="2" width="1" height="1" fill="#000000"/><rect x="4" y="2" width="2" height="1" fill="#008080"/><rect x="6" y="2" width="1" height="1" fill="#000000"/><rect x="2" y="3" width="1" height="1" fill="#000000"/><rect x="3" y="3" width="3" height="1" fill="#008080"/><rect x="6" y="3" width="6" height="1" fill="#000000"/><rect x="1" y="4" width="1" height="1" fill="#000000"/><rect x="2" y="4" width="8" height="1" fill="#008080"/><rect x="10" y="4" width="1" height="1" fill="#FFFFFF"/><rect x="11" y="4" width="1" height="1" fill="#000000"/><rect x="0" y="5" width="1" height="1" fill="#000000"/><rect x="1" y="5" width="9" height="1" fill="#008080"/><rect x="10" y="5" width="1" height="1" fill="#FFFFFF"/><rect x="11" y="5" width="1" height="1" fill="#000000"/><rect x="1" y="6" width="1" height="1" fill="#000000"/><rect x="2" y="6" width="8" height="1" fill="#008080"/><rect x="10" y="6" width="1" height="1" fill="#FFFFFF"/><rect x="11" y="6" width="1" height="1" fill="#000000"/><rect x="2" y="7" width="1" height="1" fill="#000000"/><rect x="3" y="7" width="3" height="1" fill="#008080"/><rect x="6" y="7" width="6" height="1" fill="#000000"/><rect x="3" y="8" width="1" height="1" fill="#000000"/><rect x="4" y="8" width="2" height="1" fill="#008080"/><rect x="6" y="8" width="1" height="1" fill="#000000"/><rect x="4" y="9" width="1" height="1" fill="#000000"/><rect x="5" y="9" width="1" height="1" fill="#008080"/><rect x="6" y="9" width="1" height="1" fill="#000000"/><rect x="5" y="10" width="2" height="1" fill="#000000"/></svg>
<div style="left:4px;top:62px;width:1px;height:535px;background:#FFFFFF;"></div>
<div style="left:5px;top:66px;width:874px;height:1px;background:#FFFFFF;"></div>
<div style="left:879px;top:66px;width:1px;height:531px;background:#404040;"></div>
<div style="left:4px;top:596px;width:876px;height:1px;background:#404040;"></div>
<div style="left:8px;top:64px;width:2px;height:2px;background:#202020;"></div>
<div style="left:8px;top:70px;width:516px;height:524px;background:#FFFFFF;"></div>
<div style="left:8px;top:70px;width:516px;height:1px;background:#808080;"></div>
<div style="left:8px;top:70px;width:1px;height:524px;background:#808080;"></div>
<div style="left:9px;top:71px;width:514px;height:1px;background:#404040;"></div>
<div style="left:9px;top:71px;width:1px;height:522px;background:#404040;"></div>
<div style="left:522px;top:71px;width:1px;height:522px;background:#FFFFFF;"></div>
<div style="left:9px;top:592px;width:514px;height:1px;background:#D4D0C8;"></div>
<div style="left:523px;top:70px;width:1px;height:524px;background:#FFFFFF;"></div>
<div style="left:8px;top:593px;width:516px;height:1px;background:#FFFFFF;"></div>
<div style="left:524px;top:70px;width:1px;height:524px;background:#FFFFFF;"></div>
<div style="left:10px;top:72px;width:11px;height:17px;background:#D4D0C8;"></div>
<div style="left:10px;top:72px;width:11px;height:1px;background:#FFFFFF;"></div>
<div style="left:10px;top:72px;width:1px;height:17px;background:#FFFFFF;"></div>
<div style="left:21px;top:72px;width:1px;height:18px;background:#000;"></div>
<div style="left:22px;top:72px;width:49px;height:17px;background:#D4D0C8;"></div>
<div style="left:22px;top:72px;width:49px;height:1px;background:#FFFFFF;"></div>
<div style="left:22px;top:72px;width:1px;height:17px;background:#FFFFFF;"></div>
<div style="left:71px;top:72px;width:1px;height:18px;background:#000;"></div>
<div style="left:72px;top:72px;width:174px;height:17px;background:#D4D0C8;"></div>
<div style="left:72px;top:72px;width:174px;height:1px;background:#FFFFFF;"></div>
<div style="left:72px;top:72px;width:1px;height:17px;background:#FFFFFF;"></div>
<div style="left:246px;top:72px;width:1px;height:18px;background:#000;"></div>
<div style="left:247px;top:72px;width:64px;height:17px;background:#D4D0C8;"></div>
<div style="left:247px;top:72px;width:64px;height:1px;background:#FFFFFF;"></div>
<div style="left:247px;top:72px;width:1px;height:17px;background:#FFFFFF;"></div>
<div style="left:311px;top:72px;width:1px;height:18px;background:#000;"></div>
<div style="left:312px;top:72px;width:64px;height:17px;background:#D4D0C8;"></div>
<div style="left:312px;top:72px;width:64px;height:1px;background:#FFFFFF;"></div>
<div style="left:312px;top:72px;width:1px;height:17px;background:#FFFFFF;"></div>
<div style="left:376px;top:72px;width:1px;height:18px;background:#000;"></div>
<div style="left:377px;top:72px;width:64px;height:17px;background:#D4D0C8;"></div>
<div style="left:377px;top:72px;width:64px;height:1px;background:#FFFFFF;"></div>
<div style="left:377px;top:72px;width:1px;height:17px;background:#FFFFFF;"></div>
<div style="left:441px;top:72px;width:1px;height:18px;background:#000;"></div>
<div style="left:442px;top:72px;width:63px;height:17px;background:#D4D0C8;"></div>
<div style="left:442px;top:72px;width:63px;height:1px;background:#FFFFFF;"></div>
<div style="left:442px;top:72px;width:1px;height:17px;background:#FFFFFF;"></div>
<div style="left:505px;top:72px;width:1px;height:18px;background:#000;"></div>
<div style="left:10px;top:89px;width:496px;height:1px;background:#000;"></div>
<span class="t c" style="left:22px;top:75px;width:49px;text-align:center;">Код</span>
<span class="t c" style="left:72px;top:75px;width:174px;text-align:center;">Наименование</span>
<span class="t c" style="left:247px;top:75px;width:64px;text-align:center;">Xi</span>
<span class="t c" style="left:312px;top:75px;width:64px;text-align:center;">Zi</span>
<span class="t c" style="left:377px;top:75px;width:64px;text-align:center;">lgWi</span>
<span class="t c" style="left:442px;top:75px;width:63px;text-align:center;">Wi</span>
<div style="left:10px;top:90px;width:11px;height:17px;background:#D4D0C8;"></div>
<div style="left:10px;top:90px;width:11px;height:1px;background:#FFFFFF;"></div>
<div style="left:10px;top:90px;width:1px;height:17px;background:#FFFFFF;"></div>
<div style="left:21px;top:90px;width:1px;height:18px;background:#000;"></div>
<div style="left:10px;top:107px;width:12px;height:1px;background:#000;"></div>
<div style="left:71px;top:90px;width:1px;height:18px;background:#C4C4C4;"></div>
<div style="left:246px;top:90px;width:1px;height:18px;background:#C4C4C4;"></div>
<div style="left:311px;top:90px;width:1px;height:18px;background:#C4C4C4;"></div>
<div style="left:376px;top:90px;width:1px;height:18px;background:#C4C4C4;"></div>
<div style="left:441px;top:90px;width:1px;height:18px;background:#C4C4C4;"></div>
<div style="left:22px;top:107px;width:484px;height:1px;background:#C4C4C4;"></div>
<span class="t r" style="left:22px;top:93px;width:47px;text-align:right;">408</span>
<span class="t" style="left:75px;top:93px;width:187px;overflow:hidden;">2,3-Дихлорпропен</span>
<span class="t" style="left:250px;top:93px;width:67px;overflow:hidden;">2.200</span>
<span class="t" style="left:315px;top:93px;width:67px;overflow:hidden;">2.600</span>
<span class="t" style="left:380px;top:93px;width:67px;overflow:hidden;">2.600</span>
<span class="t" style="left:445px;top:93px;width:65px;overflow:hidden;">398.107</span>
<div style="left:10px;top:108px;width:11px;height:17px;background:#D4D0C8;"></div>
<div style="left:10px;top:108px;width:11px;height:1px;background:#FFFFFF;"></div>
<div style="left:10px;top:108px;width:1px;height:17px;background:#FFFFFF;"></div>
<div style="left:21px;top:108px;width:1px;height:18px;background:#000;"></div>
<div style="left:10px;top:125px;width:12px;height:1px;background:#000;"></div>
<div style="left:71px;top:108px;width:1px;height:18px;background:#C4C4C4;"></div>
<div style="left:246px;top:108px;width:1px;height:18px;background:#C4C4C4;"></div>
<div style="left:311px;top:108px;width:1px;height:18px;background:#C4C4C4;"></div>
<div style="left:376px;top:108px;width:1px;height:18px;background:#C4C4C4;"></div>
<div style="left:441px;top:108px;width:1px;height:18px;background:#C4C4C4;"></div>
<div style="left:22px;top:125px;width:484px;height:1px;background:#C4C4C4;"></div>
<span class="t r" style="left:22px;top:111px;width:47px;text-align:right;">442</span>
<span class="t" style="left:75px;top:111px;width:187px;overflow:hidden;">2,4-Динитрофенол</span>
<span class="t" style="left:250px;top:111px;width:67px;overflow:hidden;">1.500</span>
<span class="t" style="left:315px;top:111px;width:67px;overflow:hidden;">1.667</span>
<span class="t" style="left:380px;top:111px;width:67px;overflow:hidden;">1.600</span>
<span class="t" style="left:445px;top:111px;width:65px;overflow:hidden;">39.811</span>
<div style="left:10px;top:126px;width:11px;height:17px;background:#D4D0C8;"></div>
<div style="left:10px;top:126px;width:11px;height:1px;background:#FFFFFF;"></div>
<div style="left:10px;top:126px;width:1px;height:17px;background:#FFFFFF;"></div>
<div style="left:21px;top:126px;width:1px;height:18px;background:#000;"></div>
<div style="left:10px;top:143px;width:12px;height:1px;background:#000;"></div>
<div style="left:71px;top:126px;width:1px;height:18px;background:#C4C4C4;"></div>
<div style="left:246px;top:126px;width:1px;height:18px;background:#C4C4C4;"></div>
<div style="left:311px;top:126px;width:1px;height:18px;background:#C4C4C4;"></div>
<div style="left:376px;top:126px;width:1px;height:18px;background:#C4C4C4;"></div>
<div style="left:441px;top:126px;width:1px;height:18px;background:#C4C4C4;"></div>
<div style="left:22px;top:143px;width:484px;height:1px;background:#C4C4C4;"></div>
<span class="t r" style="left:22px;top:129px;width:47px;text-align:right;">1143</span>
<span class="t" style="left:75px;top:129px;width:187px;overflow:hidden;">N- нитрозодифениламин</span>
<span class="t" style="left:250px;top:129px;width:67px;overflow:hidden;">2.800</span>
<span class="t" style="left:315px;top:129px;width:67px;overflow:hidden;">3.400</span>
<span class="t" style="left:380px;top:129px;width:67px;overflow:hidden;">3.400</span>
<span class="t" style="left:445px;top:129px;width:65px;overflow:hidden;">2511.886</span>
<div style="left:10px;top:144px;width:11px;height:17px;background:#D4D0C8;"></div>
<div style="left:10px;top:144px;width:11px;height:1px;background:#FFFFFF;"></div>
<div style="left:10px;top:144px;width:1px;height:17px;background:#FFFFFF;"></div>
<div style="left:21px;top:144px;width:1px;height:18px;background:#000;"></div>
<div style="left:10px;top:161px;width:12px;height:1px;background:#000;"></div>
<div style="left:71px;top:144px;width:1px;height:18px;background:#C4C4C4;"></div>
<div style="left:246px;top:144px;width:1px;height:18px;background:#C4C4C4;"></div>
<div style="left:311px;top:144px;width:1px;height:18px;background:#C4C4C4;"></div>
<div style="left:376px;top:144px;width:1px;height:18px;background:#C4C4C4;"></div>
<div style="left:441px;top:144px;width:1px;height:18px;background:#C4C4C4;"></div>
<div style="left:22px;top:161px;width:484px;height:1px;background:#C4C4C4;"></div>
<span class="t r" style="left:22px;top:147px;width:47px;text-align:right;">1374</span>
<span class="t" style="left:75px;top:147px;width:187px;overflow:hidden;">Альдрин</span>
<span class="t" style="left:250px;top:147px;width:67px;overflow:hidden;">1,857</span>
<span class="t" style="left:315px;top:147px;width:67px;overflow:hidden;">2,14</span>
<span class="t" style="left:380px;top:147px;width:67px;overflow:hidden;">2,14</span>
<span class="t" style="left:445px;top:147px;width:65px;overflow:hidden;">138,995</span>
<div style="left:10px;top:162px;width:11px;height:17px;background:#D4D0C8;"></div>
<div style="left:10px;top:162px;width:11px;height:1px;background:#FFFFFF;"></div>
<div style="left:10px;top:162px;width:1px;height:17px;background:#FFFFFF;"></div>
<div style="left:21px;top:162px;width:1px;height:18px;background:#000;"></div>
<div style="left:10px;top:179px;width:12px;height:1px;background:#000;"></div>
<div style="left:71px;top:162px;width:1px;height:18px;background:#C4C4C4;"></div>
<div style="left:246px;top:162px;width:1px;height:18px;background:#C4C4C4;"></div>
<div style="left:311px;top:162px;width:1px;height:18px;background:#C4C4C4;"></div>
<div style="left:376px;top:162px;width:1px;height:18px;background:#C4C4C4;"></div>
<div style="left:441px;top:162px;width:1px;height:18px;background:#C4C4C4;"></div>
<div style="left:22px;top:179px;width:484px;height:1px;background:#C4C4C4;"></div>
<span class="t r" style="left:22px;top:165px;width:47px;text-align:right;">1677</span>
<span class="t" style="left:75px;top:165px;width:187px;overflow:hidden;">Бенз/а/пирен</span>
<span class="t" style="left:250px;top:165px;width:67px;overflow:hidden;">1.600</span>
<span class="t" style="left:315px;top:165px;width:67px;overflow:hidden;">1.800</span>
<span class="t" style="left:380px;top:165px;width:67px;overflow:hidden;">1.778</span>
<span class="t" style="left:445px;top:165px;width:65px;overflow:hidden;">59.979</span>
<div style="left:10px;top:180px;width:11px;height:17px;background:#D4D0C8;"></div>
<div style="left:10px;top:180px;width:11px;height:1px;background:#FFFFFF;"></div>
<div style="left:10px;top:180px;width:1px;height:17px;background:#FFFFFF;"></div>
<div style="left:21px;top:180px;width:1px;height:18px;background:#000;"></div>
<div style="left:10px;top:197px;width:12px;height:1px;background:#000;"></div>
<div style="left:71px;top:180px;width:1px;height:18px;background:#C4C4C4;"></div>
<div style="left:246px;top:180px;width:1px;height:18px;background:#C4C4C4;"></div>
<div style="left:311px;top:180px;width:1px;height:18px;background:#C4C4C4;"></div>
<div style="left:376px;top:180px;width:1px;height:18px;background:#C4C4C4;"></div>
<div style="left:441px;top:180px;width:1px;height:18px;background:#C4C4C4;"></div>
<div style="left:22px;top:197px;width:484px;height:1px;background:#C4C4C4;"></div>
<span class="t r" style="left:22px;top:183px;width:47px;text-align:right;">1712</span>
<span class="t" style="left:75px;top:183px;width:187px;overflow:hidden;">Бензол</span>
<span class="t" style="left:250px;top:183px;width:67px;overflow:hidden;">2.125</span>
<span class="t" style="left:315px;top:183px;width:67px;overflow:hidden;">2.500</span>
<span class="t" style="left:380px;top:183px;width:67px;overflow:hidden;">2.500</span>
<span class="t" style="left:445px;top:183px;width:65px;overflow:hidden;">316.228</span>
<div style="left:10px;top:198px;width:11px;height:17px;background:#D4D0C8;"></div>
<div style="left:10px;top:198px;width:11px;height:1px;background:#FFFFFF;"></div>
<div style="left:10px;top:198px;width:1px;height:17px;background:#FFFFFF;"></div>
<div style="left:21px;top:198px;width:1px;height:18px;background:#000;"></div>
<div style="left:10px;top:215px;width:12px;height:1px;background:#000;"></div>
<div style="left:71px;top:198px;width:1px;height:18px;background:#C4C4C4;"></div>
<div style="left:246px;top:198px;width:1px;height:18px;background:#C4C4C4;"></div>
<div style="left:311px;top:198px;width:1px;height:18px;background:#C4C4C4;"></div>
<div style="left:376px;top:198px;width:1px;height:18px;background:#C4C4C4;"></div>
<div style="left:441px;top:198px;width:1px;height:18px;background:#C4C4C4;"></div>
<div style="left:22px;top:215px;width:484px;height:1px;background:#C4C4C4;"></div>
<span class="t r" style="left:22px;top:201px;width:47px;text-align:right;">2065</span>
<span class="t" style="left:75px;top:201px;width:187px;overflow:hidden;">Гексахлорбензол</span>
<span class="t" style="left:250px;top:201px;width:67px;overflow:hidden;">2.166</span>
<span class="t" style="left:315px;top:201px;width:67px;overflow:hidden;">2.555</span>
<span class="t" style="left:380px;top:201px;width:67px;overflow:hidden;">2.555</span>
<span class="t" style="left:445px;top:201px;width:65px;overflow:hidden;">358.922</span>
<div style="left:10px;top:216px;width:11px;height:17px;background:#D4D0C8;"></div>
<div style="left:10px;top:216px;width:11px;height:1px;background:#FFFFFF;"></div>
<div style="left:10px;top:216px;width:1px;height:17px;background:#FFFFFF;"></div>
<div style="left:21px;top:216px;width:1px;height:18px;background:#000;"></div>
<div style="left:10px;top:233px;width:12px;height:1px;background:#000;"></div>
<div style="left:71px;top:216px;width:1px;height:18px;background:#C4C4C4;"></div>
<div style="left:246px;top:216px;width:1px;height:18px;background:#C4C4C4;"></div>
<div style="left:311px;top:216px;width:1px;height:18px;background:#C4C4C4;"></div>
<div style="left:376px;top:216px;width:1px;height:18px;background:#C4C4C4;"></div>
<div style="left:441px;top:216px;width:1px;height:18px;background:#C4C4C4;"></div>
<div style="left:22px;top:233px;width:484px;height:1px;background:#C4C4C4;"></div>
<span class="t r" style="left:22px;top:219px;width:47px;text-align:right;">2389</span>
<span class="t" style="left:75px;top:219px;width:187px;overflow:hidden;">Дибутилфталат</span>
<span class="t" style="left:250px;top:219px;width:67px;overflow:hidden;">2.000</span>
<span class="t" style="left:315px;top:219px;width:67px;overflow:hidden;">2.334</span>
<span class="t" style="left:380px;top:219px;width:67px;overflow:hidden;">2.334</span>
<span class="t" style="left:445px;top:219px;width:65px;overflow:hidden;">215.774</span>
<div style="left:10px;top:234px;width:11px;height:17px;background:#D4D0C8;"></div>
<div style="left:10px;top:234px;width:11px;height:1px;background:#FFFFFF;"></div>
<div style="left:10px;top:234px;width:1px;height:17px;background:#FFFFFF;"></div>
<div style="left:21px;top:234px;width:1px;height:18px;background:#000;"></div>
<div style="left:10px;top:251px;width:12px;height:1px;background:#000;"></div>
<div style="left:71px;top:234px;width:1px;height:18px;background:#C4C4C4;"></div>
<div style="left:246px;top:234px;width:1px;height:18px;background:#C4C4C4;"></div>
<div style="left:311px;top:234px;width:1px;height:18px;background:#C4C4C4;"></div>
<div style="left:376px;top:234px;width:1px;height:18px;background:#C4C4C4;"></div>
<div style="left:441px;top:234px;width:1px;height:18px;background:#C4C4C4;"></div>
<div style="left:22px;top:251px;width:484px;height:1px;background:#C4C4C4;"></div>
<span class="t r" style="left:22px;top:237px;width:47px;text-align:right;">2509</span>
<span class="t" style="left:75px;top:237px;width:187px;overflow:hidden;">Диметилфталат</span>
<span class="t" style="left:250px;top:237px;width:67px;overflow:hidden;">2.166</span>
<span class="t" style="left:315px;top:237px;width:67px;overflow:hidden;">2.555</span>
<span class="t" style="left:380px;top:237px;width:67px;overflow:hidden;">2.555</span>
<span class="t" style="left:445px;top:237px;width:65px;overflow:hidden;">358.921</span>
<div style="left:10px;top:252px;width:11px;height:17px;background:#D4D0C8;"></div>
<div style="left:10px;top:252px;width:11px;height:1px;background:#FFFFFF;"></div>
<div style="left:10px;top:252px;width:1px;height:17px;background:#FFFFFF;"></div>
<div style="left:21px;top:252px;width:1px;height:18px;background:#000;"></div>
<div style="left:10px;top:269px;width:12px;height:1px;background:#000;"></div>
<div style="left:71px;top:252px;width:1px;height:18px;background:#C4C4C4;"></div>
<div style="left:246px;top:252px;width:1px;height:18px;background:#C4C4C4;"></div>
<div style="left:311px;top:252px;width:1px;height:18px;background:#C4C4C4;"></div>
<div style="left:376px;top:252px;width:1px;height:18px;background:#C4C4C4;"></div>
<div style="left:441px;top:252px;width:1px;height:18px;background:#C4C4C4;"></div>
<div style="left:22px;top:269px;width:484px;height:1px;background:#C4C4C4;"></div>
<span class="t r" style="left:22px;top:255px;width:47px;text-align:right;">2552</span>
<span class="t" style="left:75px;top:255px;width:187px;overflow:hidden;">Диоксины</span>
<span class="t" style="left:250px;top:255px;width:67px;overflow:hidden;">1.400</span>
<span class="t" style="left:315px;top:255px;width:67px;overflow:hidden;">1.534</span>
<span class="t" style="left:380px;top:255px;width:67px;overflow:hidden;">1.392</span>
<span class="t" style="left:445px;top:255px;width:65px;overflow:hidden;">24.660</span>
<div style="left:10px;top:270px;width:11px;height:17px;background:#D4D0C8;"></div>
<div style="left:10px;top:270px;width:11px;height:1px;background:#FFFFFF;"></div>
<div style="left:10px;top:270px;width:1px;height:17px;background:#FFFFFF;"></div>
<div style="left:21px;top:270px;width:1px;height:18px;background:#000;"></div>
<div style="left:10px;top:287px;width:12px;height:1px;background:#000;"></div>
<div style="left:71px;top:270px;width:1px;height:18px;background:#C4C4C4;"></div>
<div style="left:246px;top:270px;width:1px;height:18px;background:#C4C4C4;"></div>
<div style="left:311px;top:270px;width:1px;height:18px;background:#C4C4C4;"></div>
<div style="left:376px;top:270px;width:1px;height:18px;background:#C4C4C4;"></div>
<div style="left:441px;top:270px;width:1px;height:18px;background:#C4C4C4;"></div>
<div style="left:22px;top:287px;width:484px;height:1px;background:#C4C4C4;"></div>
<span class="t r" style="left:22px;top:273px;width:47px;text-align:right;">2629</span>
<span class="t" style="left:75px;top:273px;width:187px;overflow:hidden;">Дихлордифенилтрихлорэтан</span>
<span class="t" style="left:250px;top:273px;width:67px;overflow:hidden;">2.000</span>
<span class="t" style="left:315px;top:273px;width:67px;overflow:hidden;">2.334</span>
<span class="t" style="left:380px;top:273px;width:67px;overflow:hidden;">2.334</span>
<span class="t" style="left:445px;top:273px;width:65px;overflow:hidden;">215.774</span>
<div style="left:10px;top:288px;width:11px;height:17px;background:#D4D0C8;"></div>
<div style="left:10px;top:288px;width:11px;height:1px;background:#FFFFFF;"></div>
<div style="left:10px;top:288px;width:1px;height:17px;background:#FFFFFF;"></div>
<div style="left:21px;top:288px;width:1px;height:18px;background:#000;"></div>
<div style="left:10px;top:305px;width:12px;height:1px;background:#000;"></div>
<div style="left:71px;top:288px;width:1px;height:18px;background:#C4C4C4;"></div>
<div style="left:246px;top:288px;width:1px;height:18px;background:#C4C4C4;"></div>
<div style="left:311px;top:288px;width:1px;height:18px;background:#C4C4C4;"></div>
<div style="left:376px;top:288px;width:1px;height:18px;background:#C4C4C4;"></div>
<div style="left:441px;top:288px;width:1px;height:18px;background:#C4C4C4;"></div>
<div style="left:22px;top:305px;width:484px;height:1px;background:#C4C4C4;"></div>
<span class="t r" style="left:22px;top:291px;width:47px;text-align:right;">2652</span>
<span class="t" style="left:75px;top:291px;width:187px;overflow:hidden;">Дихлорфенол</span>
<span class="t" style="left:250px;top:291px;width:67px;overflow:hidden;">1.500</span>
<span class="t" style="left:315px;top:291px;width:67px;overflow:hidden;">1.667</span>
<span class="t" style="left:380px;top:291px;width:67px;overflow:hidden;">1.600</span>
<span class="t" style="left:445px;top:291px;width:65px;overflow:hidden;">39.811</span>
<div style="left:10px;top:306px;width:11px;height:17px;background:#D4D0C8;"></div>
<div style="left:10px;top:306px;width:11px;height:1px;background:#FFFFFF;"></div>
<div style="left:10px;top:306px;width:1px;height:17px;background:#FFFFFF;"></div>
<div style="left:21px;top:306px;width:1px;height:18px;background:#000;"></div>
<div style="left:10px;top:323px;width:12px;height:1px;background:#000;"></div>
<div style="left:71px;top:306px;width:1px;height:18px;background:#C4C4C4;"></div>
<div style="left:246px;top:306px;width:1px;height:18px;background:#C4C4C4;"></div>
<div style="left:311px;top:306px;width:1px;height:18px;background:#C4C4C4;"></div>
<div style="left:376px;top:306px;width:1px;height:18px;background:#C4C4C4;"></div>
<div style="left:441px;top:306px;width:1px;height:18px;background:#C4C4C4;"></div>
<div style="left:22px;top:323px;width:484px;height:1px;background:#C4C4C4;"></div>
<span class="t r" style="left:22px;top:309px;width:47px;text-align:right;">3005</span>
<span class="t" style="left:75px;top:309px;width:187px;overflow:hidden;">Кадмий</span>
<span class="t" style="left:250px;top:309px;width:67px;overflow:hidden;">1.420</span>
<span class="t" style="left:315px;top:309px;width:67px;overflow:hidden;">1.560</span>
<span class="t" style="left:380px;top:309px;width:67px;overflow:hidden;">1.436</span>
<span class="t" style="left:445px;top:309px;width:65px;overflow:hidden;">27.290</span>
<div style="left:10px;top:324px;width:11px;height:17px;background:#D4D0C8;"></div>
<div style="left:10px;top:324px;width:11px;height:1px;background:#FFFFFF;"></div>
<div style="left:10px;top:324px;width:1px;height:17px;background:#FFFFFF;"></div>
<div style="left:21px;top:324px;width:1px;height:18px;background:#000;"></div>
<div style="left:10px;top:341px;width:12px;height:1px;background:#000;"></div>
<div style="left:71px;top:324px;width:1px;height:18px;background:#C4C4C4;"></div>
<div style="left:246px;top:324px;width:1px;height:18px;background:#C4C4C4;"></div>
<div style="left:311px;top:324px;width:1px;height:18px;background:#C4C4C4;"></div>
<div style="left:376px;top:324px;width:1px;height:18px;background:#C4C4C4;"></div>
<div style="left:441px;top:324px;width:1px;height:18px;background:#C4C4C4;"></div>
<div style="left:22px;top:341px;width:484px;height:1px;background:#C4C4C4;"></div>
<span class="t r" style="left:22px;top:327px;width:47px;text-align:right;">3649</span>
<span class="t" style="left:75px;top:327px;width:187px;overflow:hidden;">Линдан</span>
<span class="t" style="left:250px;top:327px;width:67px;overflow:hidden;">2.250</span>
<span class="t" style="left:315px;top:327px;width:67px;overflow:hidden;">2.667</span>
<span class="t" style="left:380px;top:327px;width:67px;overflow:hidden;">2.667</span>
<span class="t" style="left:445px;top:327px;width:65px;overflow:hidden;">464.515</span>
<div style="left:10px;top:342px;width:11px;height:17px;background:#D4D0C8;"></div>
<div style="left:10px;top:342px;width:11px;height:1px;background:#FFFFFF;"></div>
<div style="left:10px;top:342px;width:1px;height:17px;background:#FFFFFF;"></div>
<div style="left:21px;top:342px;width:1px;height:18px;background:#000;"></div>
<div style="left:10px;top:359px;width:12px;height:1px;background:#000;"></div>
<div style="left:71px;top:342px;width:1px;height:18px;background:#C4C4C4;"></div>
<div style="left:246px;top:342px;width:1px;height:18px;background:#C4C4C4;"></div>
<div style="left:311px;top:342px;width:1px;height:18px;background:#C4C4C4;"></div>
<div style="left:376px;top:342px;width:1px;height:18px;background:#C4C4C4;"></div>
<div style="left:441px;top:342px;width:1px;height:18px;background:#C4C4C4;"></div>
<div style="left:22px;top:359px;width:484px;height:1px;background:#C4C4C4;"></div>
<span class="t r" style="left:22px;top:345px;width:47px;text-align:right;">3746</span>
<span class="t" style="left:75px;top:345px;width:187px;overflow:hidden;">Марганец</span>
<span class="t" style="left:250px;top:345px;width:67px;overflow:hidden;">2.300</span>
<span class="t" style="left:315px;top:345px;width:67px;overflow:hidden;">2.734</span>
<span class="t" style="left:380px;top:345px;width:67px;overflow:hidden;">2.734</span>
<span class="t" style="left:445px;top:345px;width:65px;overflow:hidden;">542.001</span>
<div style="left:10px;top:360px;width:11px;height:17px;background:#D4D0C8;"></div>
<div style="left:10px;top:360px;width:11px;height:1px;background:#FFFFFF;"></div>
<div style="left:10px;top:360px;width:1px;height:17px;background:#FFFFFF;"></div>
<div style="left:21px;top:360px;width:1px;height:18px;background:#000;"></div>
<div style="left:10px;top:377px;width:12px;height:1px;background:#000;"></div>
<div style="left:71px;top:360px;width:1px;height:18px;background:#C4C4C4;"></div>
<div style="left:246px;top:360px;width:1px;height:18px;background:#C4C4C4;"></div>
<div style="left:311px;top:360px;width:1px;height:18px;background:#C4C4C4;"></div>
<div style="left:376px;top:360px;width:1px;height:18px;background:#C4C4C4;"></div>
<div style="left:441px;top:360px;width:1px;height:18px;background:#C4C4C4;"></div>
<div style="left:22px;top:377px;width:484px;height:1px;background:#C4C4C4;"></div>
<span class="t r" style="left:22px;top:363px;width:47px;text-align:right;">3785</span>
<span class="t" style="left:75px;top:363px;width:187px;overflow:hidden;">Медь</span>
<span class="t" style="left:250px;top:363px;width:67px;overflow:hidden;">2,17</span>
<span class="t" style="left:315px;top:363px;width:67px;overflow:hidden;">2,56</span>
<span class="t" style="left:380px;top:363px;width:67px;overflow:hidden;">2,56</span>
<span class="t" style="left:445px;top:363px;width:65px;overflow:hidden;">363,0780547</span>
<div style="left:10px;top:378px;width:11px;height:17px;background:#D4D0C8;"></div>
<div style="left:10px;top:378px;width:11px;height:1px;background:#FFFFFF;"></div>
<div style="left:10px;top:378px;width:1px;height:17px;background:#FFFFFF;"></div>
<div style="left:21px;top:378px;width:1px;height:18px;background:#000;"></div>
<div style="left:10px;top:395px;width:12px;height:1px;background:#000;"></div>
<div style="left:71px;top:378px;width:1px;height:18px;background:#C4C4C4;"></div>
<div style="left:246px;top:378px;width:1px;height:18px;background:#C4C4C4;"></div>
<div style="left:311px;top:378px;width:1px;height:18px;background:#C4C4C4;"></div>
<div style="left:376px;top:378px;width:1px;height:18px;background:#C4C4C4;"></div>
<div style="left:441px;top:378px;width:1px;height:18px;background:#C4C4C4;"></div>
<div style="left:22px;top:395px;width:484px;height:1px;background:#C4C4C4;"></div>
<span class="t r" style="left:22px;top:381px;width:47px;text-align:right;">4066</span>
<span class="t" style="left:75px;top:381px;width:187px;overflow:hidden;">Мышьяк</span>
<span class="t" style="left:250px;top:381px;width:67px;overflow:hidden;">1.580</span>
<span class="t" style="left:315px;top:381px;width:67px;overflow:hidden;">1.774</span>
<span class="t" style="left:380px;top:381px;width:67px;overflow:hidden;">1.745</span>
<span class="t" style="left:445px;top:381px;width:65px;overflow:hidden;">55.590</span>
<div style="left:10px;top:396px;width:11px;height:17px;background:#D4D0C8;"></div>
<div style="left:10px;top:396px;width:11px;height:1px;background:#FFFFFF;"></div>
<div style="left:10px;top:396px;width:1px;height:17px;background:#FFFFFF;"></div>
<div style="left:21px;top:396px;width:1px;height:18px;background:#000;"></div>
<div style="left:10px;top:413px;width:12px;height:1px;background:#000;"></div>
<div style="left:71px;top:396px;width:1px;height:18px;background:#C4C4C4;"></div>
<div style="left:246px;top:396px;width:1px;height:18px;background:#C4C4C4;"></div>
<div style="left:311px;top:396px;width:1px;height:18px;background:#C4C4C4;"></div>
<div style="left:376px;top:396px;width:1px;height:18px;background:#C4C4C4;"></div>
<div style="left:441px;top:396px;width:1px;height:18px;background:#C4C4C4;"></div>
<div style="left:22px;top:413px;width:484px;height:1px;background:#C4C4C4;"></div>
<span class="t r" style="left:22px;top:399px;width:47px;text-align:right;">4150</span>
<span class="t" style="left:75px;top:399px;width:187px;overflow:hidden;">Нафталин</span>
<span class="t" style="left:250px;top:399px;width:67px;overflow:hidden;">2.285</span>
<span class="t" style="left:315px;top:399px;width:67px;overflow:hidden;">2.714</span>
<span class="t" style="left:380px;top:399px;width:67px;overflow:hidden;">2.714</span>
<span class="t" style="left:445px;top:399px;width:65px;overflow:hidden;">517.607</span>
<div style="left:10px;top:414px;width:11px;height:17px;background:#D4D0C8;"></div>
<div style="left:10px;top:414px;width:11px;height:1px;background:#FFFFFF;"></div>
<div style="left:10px;top:414px;width:1px;height:17px;background:#FFFFFF;"></div>
<div style="left:21px;top:414px;width:1px;height:18px;background:#000;"></div>
<div style="left:10px;top:431px;width:12px;height:1px;background:#000;"></div>
<div style="left:71px;top:414px;width:1px;height:18px;background:#C4C4C4;"></div>
<div style="left:246px;top:414px;width:1px;height:18px;background:#C4C4C4;"></div>
<div style="left:311px;top:414px;width:1px;height:18px;background:#C4C4C4;"></div>
<div style="left:376px;top:414px;width:1px;height:18px;background:#C4C4C4;"></div>
<div style="left:441px;top:414px;width:1px;height:18px;background:#C4C4C4;"></div>
<div style="left:22px;top:431px;width:484px;height:1px;background:#C4C4C4;"></div>
<span class="t r" style="left:22px;top:417px;width:47px;text-align:right;">4211</span>
<span class="t" style="left:75px;top:417px;width:187px;overflow:hidden;">Никель</span>
<span class="t" style="left:250px;top:417px;width:67px;overflow:hidden;">1.830</span>
<span class="t" style="left:315px;top:417px;width:67px;overflow:hidden;">2.107</span>
<span class="t" style="left:380px;top:417px;width:67px;overflow:hidden;">2.107</span>
<span class="t" style="left:445px;top:417px;width:65px;overflow:hidden;">127.938</span>
<div style="left:10px;top:432px;width:11px;height:17px;background:#D4D0C8;"></div>
<div style="left:10px;top:432px;width:11px;height:1px;background:#FFFFFF;"></div>
<div style="left:10px;top:432px;width:1px;height:17px;background:#FFFFFF;"></div>
<div style="left:21px;top:432px;width:1px;height:18px;background:#000;"></div>
<div style="left:10px;top:449px;width:12px;height:1px;background:#000;"></div>
<div style="left:71px;top:432px;width:1px;height:18px;background:#C4C4C4;"></div>
<div style="left:246px;top:432px;width:1px;height:18px;background:#C4C4C4;"></div>
<div style="left:311px;top:432px;width:1px;height:18px;background:#C4C4C4;"></div>
<div style="left:376px;top:432px;width:1px;height:18px;background:#C4C4C4;"></div>
<div style="left:441px;top:432px;width:1px;height:18px;background:#C4C4C4;"></div>
<div style="left:22px;top:449px;width:484px;height:1px;background:#C4C4C4;"></div>
<span class="t r" style="left:22px;top:435px;width:47px;text-align:right;">4564</span>
<span class="t" style="left:75px;top:435px;width:187px;overflow:hidden;">Пентахлорбифенилы</span>
<span class="t" style="left:250px;top:435px;width:67px;overflow:hidden;">1.600</span>
<span class="t" style="left:315px;top:435px;width:67px;overflow:hidden;">1.800</span>
<span class="t" style="left:380px;top:435px;width:67px;overflow:hidden;">1.778</span>
<span class="t" style="left:445px;top:435px;width:65px;overflow:hidden;">59.979</span>
<div style="left:10px;top:450px;width:11px;height:17px;background:#D4D0C8;"></div>
<div style="left:10px;top:450px;width:11px;height:1px;background:#FFFFFF;"></div>
<div style="left:10px;top:450px;width:1px;height:17px;background:#FFFFFF;"></div>
<div style="left:21px;top:450px;width:1px;height:18px;background:#000;"></div>
<div style="left:10px;top:467px;width:12px;height:1px;background:#000;"></div>
<div style="left:71px;top:450px;width:1px;height:18px;background:#C4C4C4;"></div>
<div style="left:246px;top:450px;width:1px;height:18px;background:#C4C4C4;"></div>
<div style="left:311px;top:450px;width:1px;height:18px;background:#C4C4C4;"></div>
<div style="left:376px;top:450px;width:1px;height:18px;background:#C4C4C4;"></div>
<div style="left:441px;top:450px;width:1px;height:18px;background:#C4C4C4;"></div>
<div style="left:22px;top:467px;width:484px;height:1px;background:#C4C4C4;"></div>
<span class="t r" style="left:22px;top:453px;width:47px;text-align:right;">4570</span>
<span class="t" style="left:75px;top:453px;width:187px;overflow:hidden;">Пентахлорфенол</span>
<span class="t" style="left:250px;top:453px;width:67px;overflow:hidden;">1.660</span>
<span class="t" style="left:315px;top:453px;width:67px;overflow:hidden;">1.880</span>
<span class="t" style="left:380px;top:453px;width:67px;overflow:hidden;">1.872</span>
<span class="t" style="left:445px;top:453px;width:65px;overflow:hidden;">74.473</span>
<div style="left:10px;top:468px;width:11px;height:17px;background:#D4D0C8;"></div>
<div style="left:10px;top:468px;width:11px;height:1px;background:#FFFFFF;"></div>
<div style="left:10px;top:468px;width:1px;height:17px;background:#FFFFFF;"></div>
<div style="left:21px;top:468px;width:1px;height:18px;background:#000;"></div>
<div style="left:10px;top:485px;width:12px;height:1px;background:#000;"></div>
<div style="left:71px;top:468px;width:1px;height:18px;background:#C4C4C4;"></div>
<div style="left:246px;top:468px;width:1px;height:18px;background:#C4C4C4;"></div>
<div style="left:311px;top:468px;width:1px;height:18px;background:#C4C4C4;"></div>
<div style="left:376px;top:468px;width:1px;height:18px;background:#C4C4C4;"></div>
<div style="left:441px;top:468px;width:1px;height:18px;background:#C4C4C4;"></div>
<div style="left:22px;top:485px;width:484px;height:1px;background:#C4C4C4;"></div>
<span class="t r" style="left:22px;top:471px;width:47px;text-align:right;">5056</span>
<span class="t" style="left:75px;top:471px;width:187px;overflow:hidden;">Ртуть</span>
<span class="t" style="left:250px;top:471px;width:67px;overflow:hidden;">1.250</span>
<span class="t" style="left:315px;top:471px;width:67px;overflow:hidden;">1.334</span>
<span class="t" style="left:380px;top:471px;width:67px;overflow:hidden;">1.001</span>
<span class="t" style="left:445px;top:471px;width:65px;overflow:hidden;">10.023</span>
<div style="left:10px;top:486px;width:11px;height:17px;background:#D4D0C8;"></div>
<div style="left:10px;top:486px;width:11px;height:1px;background:#FFFFFF;"></div>
<div style="left:10px;top:486px;width:1px;height:17px;background:#FFFFFF;"></div>
<div style="left:21px;top:486px;width:1px;height:18px;background:#000;"></div>
<div style="left:10px;top:503px;width:12px;height:1px;background:#000;"></div>
<div style="left:71px;top:486px;width:1px;height:18px;background:#C4C4C4;"></div>
<div style="left:246px;top:486px;width:1px;height:18px;background:#C4C4C4;"></div>
<div style="left:311px;top:486px;width:1px;height:18px;background:#C4C4C4;"></div>
<div style="left:376px;top:486px;width:1px;height:18px;background:#C4C4C4;"></div>
<div style="left:441px;top:486px;width:1px;height:18px;background:#C4C4C4;"></div>
<div style="left:22px;top:503px;width:484px;height:1px;background:#C4C4C4;"></div>
<span class="t r" style="left:22px;top:489px;width:47px;text-align:right;">5147</span>
<span class="t" style="left:75px;top:489px;width:187px;overflow:hidden;">Свинец</span>
<span class="t" style="left:250px;top:489px;width:67px;overflow:hidden;">1.460</span>
<span class="t" style="left:315px;top:489px;width:67px;overflow:hidden;">1.614</span>
<span class="t" style="left:380px;top:489px;width:67px;overflow:hidden;">1.522</span>
<span class="t" style="left:445px;top:489px;width:65px;overflow:hidden;">33.266</span>
<div style="left:10px;top:504px;width:11px;height:17px;background:#D4D0C8;"></div>
<div style="left:10px;top:504px;width:11px;height:1px;background:#FFFFFF;"></div>
<div style="left:10px;top:504px;width:1px;height:17px;background:#FFFFFF;"></div>
<div style="left:21px;top:504px;width:1px;height:18px;background:#000;"></div>
<div style="left:10px;top:521px;width:12px;height:1px;background:#000;"></div>
<div style="left:71px;top:504px;width:1px;height:18px;background:#C4C4C4;"></div>
<div style="left:246px;top:504px;width:1px;height:18px;background:#C4C4C4;"></div>
<div style="left:311px;top:504px;width:1px;height:18px;background:#C4C4C4;"></div>
<div style="left:376px;top:504px;width:1px;height:18px;background:#C4C4C4;"></div>
<div style="left:441px;top:504px;width:1px;height:18px;background:#C4C4C4;"></div>
<div style="left:22px;top:521px;width:484px;height:1px;background:#C4C4C4;"></div>
<span class="t r" style="left:22px;top:507px;width:47px;text-align:right;">5183</span>
<span class="t" style="left:75px;top:507px;width:187px;overflow:hidden;">Серебро</span>
<span class="t" style="left:250px;top:507px;width:67px;overflow:hidden;">2.140</span>
<span class="t" style="left:315px;top:507px;width:67px;overflow:hidden;">2.520</span>
<span class="t" style="left:380px;top:507px;width:67px;overflow:hidden;">2.520</span>
<span class="t" style="left:445px;top:507px;width:65px;overflow:hidden;">331.131</span>
<div style="left:10px;top:522px;width:11px;height:17px;background:#D4D0C8;"></div>
<div style="left:10px;top:522px;width:11px;height:1px;background:#FFFFFF;"></div>
<div style="left:10px;top:522px;width:1px;height:17px;background:#FFFFFF;"></div>
<div style="left:21px;top:522px;width:1px;height:18px;background:#000;"></div>
<div style="left:10px;top:539px;width:12px;height:1px;background:#000;"></div>
<div style="left:71px;top:522px;width:1px;height:18px;background:#C4C4C4;"></div>
<div style="left:246px;top:522px;width:1px;height:18px;background:#C4C4C4;"></div>
<div style="left:311px;top:522px;width:1px;height:18px;background:#C4C4C4;"></div>
<div style="left:376px;top:522px;width:1px;height:18px;background:#C4C4C4;"></div>
<div style="left:441px;top:522px;width:1px;height:18px;background:#C4C4C4;"></div>
<div style="left:22px;top:539px;width:484px;height:1px;background:#C4C4C4;"></div>
<span class="t r" style="left:22px;top:525px;width:47px;text-align:right;">5381</span>
<span class="t" style="left:75px;top:525px;width:187px;overflow:hidden;">Стронций</span>
<span class="t" style="left:250px;top:525px;width:67px;overflow:hidden;">2.860</span>
<span class="t" style="left:315px;top:525px;width:67px;overflow:hidden;">3.480</span>
<span class="t" style="left:380px;top:525px;width:67px;overflow:hidden;">3.480</span>
<span class="t" style="left:445px;top:525px;width:65px;overflow:hidden;">3019.952</span>
<div style="left:10px;top:540px;width:11px;height:17px;background:#D4D0C8;"></div>
<div style="left:10px;top:540px;width:11px;height:1px;background:#FFFFFF;"></div>
<div style="left:10px;top:540px;width:1px;height:17px;background:#FFFFFF;"></div>
<div style="left:21px;top:540px;width:1px;height:18px;background:#000;"></div>
<div style="left:10px;top:557px;width:12px;height:1px;background:#000;"></div>
<div style="left:71px;top:540px;width:1px;height:18px;background:#C4C4C4;"></div>
<div style="left:246px;top:540px;width:1px;height:18px;background:#C4C4C4;"></div>
<div style="left:311px;top:540px;width:1px;height:18px;background:#C4C4C4;"></div>
<div style="left:376px;top:540px;width:1px;height:18px;background:#C4C4C4;"></div>
<div style="left:441px;top:540px;width:1px;height:18px;background:#C4C4C4;"></div>
<div style="left:22px;top:557px;width:484px;height:1px;background:#C4C4C4;"></div>
<span class="t r" style="left:22px;top:543px;width:47px;text-align:right;">5576</span>
<span class="t" style="left:75px;top:543px;width:187px;overflow:hidden;">Тетрахлорэтан</span>
<span class="t" style="left:250px;top:543px;width:67px;overflow:hidden;">2.400</span>
<span class="t" style="left:315px;top:543px;width:67px;overflow:hidden;">2.867</span>
<span class="t" style="left:380px;top:543px;width:67px;overflow:hidden;">2.867</span>
<span class="t" style="left:445px;top:543px;width:65px;overflow:hidden;">736.207</span>
<div style="left:10px;top:558px;width:11px;height:17px;background:#D4D0C8;"></div>
<div style="left:10px;top:558px;width:11px;height:1px;background:#FFFFFF;"></div>
<div style="left:10px;top:558px;width:1px;height:17px;background:#FFFFFF;"></div>
<div style="left:21px;top:558px;width:1px;height:18px;background:#000;"></div>
<div style="left:10px;top:575px;width:12px;height:1px;background:#000;"></div>
<div style="left:71px;top:558px;width:1px;height:18px;background:#C4C4C4;"></div>
<div style="left:246px;top:558px;width:1px;height:18px;background:#C4C4C4;"></div>
<div style="left:311px;top:558px;width:1px;height:18px;background:#C4C4C4;"></div>
<div style="left:376px;top:558px;width:1px;height:18px;background:#C4C4C4;"></div>
<div style="left:441px;top:558px;width:1px;height:18px;background:#C4C4C4;"></div>
<div style="left:22px;top:575px;width:484px;height:1px;background:#C4C4C4;"></div>
<span class="t r" style="left:22px;top:561px;width:47px;text-align:right;">5649</span>
<span class="t" style="left:75px;top:561px;width:187px;overflow:hidden;">Толуол</span>
<span class="t" style="left:250px;top:561px;width:67px;overflow:hidden;">2.500</span>
<span class="t" style="left:315px;top:561px;width:67px;overflow:hidden;">3.000</span>
<span class="t" style="left:380px;top:561px;width:67px;overflow:hidden;">3.000</span>
<span class="t" style="left:445px;top:561px;width:65px;overflow:hidden;">1000.000</span>
<svg style="left:13px;top:93px" width="6" height="11" viewBox="0 0 6 11" shape-rendering="crispEdges"><rect x="0" y="0" width="1" height="1" fill="#000000"/><rect x="0" y="1" width="2" height="1" fill="#000000"/><rect x="0" y="2" width="3" height="1" fill="#000000"/><rect x="0" y="3" width="4" height="1" fill="#000000"/><rect x="0" y="4" width="5" height="1" fill="#000000"/><rect x="0" y="5" width="6" height="1" fill="#000000"/><rect x="0" y="6" width="5" height="1" fill="#000000"/><rect x="0" y="7" width="4" height="1" fill="#000000"/><rect x="0" y="8" width="3" height="1" fill="#000000"/><rect x="0" y="9" width="2" height="1" fill="#000000"/><rect x="0" y="10" width="1" height="1" fill="#000000"/></svg>
<div style="left:506px;top:72px;width:16px;height:520px;background:repeating-conic-gradient(#fff 0 25%,#D4D0C8 0 50%) 0 0/2px 2px;"></div>
<div style="left:506px;top:72px;width:16px;height:16px;background:#D4D0C8;"></div>
<div style="left:506px;top:72px;width:16px;height:1px;background:#FFFFFF;"></div>
<div style="left:506px;top:72px;width:1px;height:16px;background:#FFFFFF;"></div>
<div style="left:506px;top:87px;width:16px;height:1px;background:#404040;"></div>
<div style="left:521px;top:72px;width:1px;height:16px;background:#404040;"></div>
<div style="left:507px;top:86px;width:14px;height:1px;background:#808080;"></div>
<div style="left:520px;top:73px;width:1px;height:14px;background:#808080;"></div>
<svg style="left:510px;top:78px" width="8" height="5" viewBox="0 0 8 5" shape-rendering="crispEdges"><path d="M3 0h1v1h1v1h1v1h1v1h-7v-1h1v-1h1v-1h1z" fill="#000"/></svg>
<div style="left:506px;top:88px;width:16px;height:16px;background:#D4D0C8;"></div>
<div style="left:506px;top:88px;width:16px;height:1px;background:#FFFFFF;"></div>
<div style="left:506px;top:88px;width:1px;height:16px;background:#FFFFFF;"></div>
<div style="left:506px;top:103px;width:16px;height:1px;background:#404040;"></div>
<div style="left:521px;top:88px;width:1px;height:16px;background:#404040;"></div>
<div style="left:507px;top:102px;width:14px;height:1px;background:#808080;"></div>
<div style="left:520px;top:89px;width:1px;height:14px;background:#808080;"></div>
<div style="left:506px;top:576px;width:16px;height:16px;background:#D4D0C8;"></div>
<div style="left:506px;top:576px;width:16px;height:1px;background:#FFFFFF;"></div>
<div style="left:506px;top:576px;width:1px;height:16px;background:#FFFFFF;"></div>
<div style="left:506px;top:591px;width:16px;height:1px;background:#404040;"></div>
<div style="left:521px;top:576px;width:1px;height:16px;background:#404040;"></div>
<div style="left:507px;top:590px;width:14px;height:1px;background:#808080;"></div>
<div style="left:520px;top:577px;width:1px;height:14px;background:#808080;"></div>
<svg style="left:510px;top:582px" width="8" height="5" viewBox="0 0 8 5" shape-rendering="crispEdges"><path d="M0 0h7v1h-1v1h-1v1h-1v1h-1v-1h-1v-1h-1v-1h-1z" fill="#000"/></svg>
<div style="left:524px;top:70px;width:352px;height:1px;background:#FFFFFF;"></div>
<div style="left:525px;top:71px;width:1px;height:481px;background:#808080;"></div>
<div style="left:525px;top:71px;width:350px;height:1px;background:#808080;"></div>
<div style="left:526px;top:72px;width:1px;height:479px;background:#404040;"></div>
<div style="left:526px;top:72px;width:348px;height:1px;background:#404040;"></div>
<div style="left:874px;top:71px;width:1px;height:482px;background:#FFFFFF;"></div>
<div style="left:525px;top:551px;width:350px;height:1px;background:#FFFFFF;"></div>
<div style="left:525px;top:552px;width:350px;height:1px;background:#FFFFFF;"></div>
<div style="left:875px;top:70px;width:1px;height:523px;background:#808080;"></div>
<div style="left:524px;top:592px;width:352px;height:1px;background:#808080;"></div>
<div style="left:535px;top:82px;width:278px;height:58px;border:1px solid #808080;box-shadow:1px 1px 0 #FFFFFF inset, 1px 1px 0 #FFFFFF;"></div>
<span class="t" style="left:543px;top:78px;background:#D4D0C8;padding:0 1px;">Наименование компонента</span>
<span class="t" style="left:540px;top:94px;">Краткое</span>
<span class="t" style="left:540px;top:122px;">Полное</span>
<div style="left:591px;top:90px;width:217px;height:19px;background:#FFFFFF;"></div>
<div style="left:591px;top:90px;width:217px;height:1px;background:#808080;"></div>
<div style="left:591px;top:90px;width:1px;height:19px;background:#808080;"></div>
<div style="left:592px;top:91px;width:215px;height:1px;background:#404040;"></div>
<div style="left:592px;top:91px;width:1px;height:17px;background:#404040;"></div>
<div style="left:591px;top:108px;width:217px;height:1px;background:#FFFFFF;"></div>
<div style="left:807px;top:90px;width:1px;height:19px;background:#FFFFFF;"></div>
<div style="left:592px;top:107px;width:215px;height:1px;background:#D4D0C8;"></div>
<div style="left:806px;top:91px;width:1px;height:17px;background:#D4D0C8;"></div>
<span class="t" style="left:595px;top:93px;">2,3-Дихлорпропен</span>
<div style="left:591px;top:114px;width:217px;height:24px;background:#FFFFFF;"></div>
<div style="left:591px;top:114px;width:217px;height:1px;background:#808080;"></div>
<div style="left:591px;top:114px;width:1px;height:24px;background:#808080;"></div>
<div style="left:592px;top:115px;width:215px;height:1px;background:#404040;"></div>
<div style="left:592px;top:115px;width:1px;height:22px;background:#404040;"></div>
<div style="left:591px;top:137px;width:217px;height:1px;background:#FFFFFF;"></div>
<div style="left:807px;top:114px;width:1px;height:24px;background:#FFFFFF;"></div>
<div style="left:592px;top:136px;width:215px;height:1px;background:#D4D0C8;"></div>
<div style="left:806px;top:115px;width:1px;height:22px;background:#D4D0C8;"></div>
<span class="t" style="left:595px;top:117px;width:212px;overflow:hidden;letter-spacing:-0.1px;">2,3-Дихлорпроп-1-ен(2,3-Дихлорпропе</span>
<div style="left:790px;top:115px;width:16px;height:10px;background:#D4D0C8;"></div>
<div style="left:790px;top:115px;width:16px;height:1px;background:#FFFFFF;"></div>
<div style="left:790px;top:115px;width:1px;height:10px;background:#FFFFFF;"></div>
<div style="left:790px;top:124px;width:16px;height:1px;background:#404040;"></div>
<div style="left:805px;top:115px;width:1px;height:10px;background:#404040;"></div>
<div style="left:791px;top:123px;width:14px;height:1px;background:#808080;"></div>
<div style="left:804px;top:116px;width:1px;height:8px;background:#808080;"></div>
<svg style="left:796px;top:118px" width="5" height="3" viewBox="0 0 5 3" shape-rendering="crispEdges"><path d="M2 0h1v1h1v1h1v1h-5v-1h1v-1h1z" fill="#000"/></svg>
<div style="left:790px;top:126px;width:16px;height:10px;background:#D4D0C8;"></div>
<div style="left:790px;top:126px;width:16px;height:1px;background:#FFFFFF;"></div>
<div style="left:790px;top:126px;width:1px;height:10px;background:#FFFFFF;"></div>
<div style="left:790px;top:135px;width:16px;height:1px;background:#404040;"></div>
<div style="left:805px;top:126px;width:1px;height:10px;background:#404040;"></div>
<div style="left:791px;top:134px;width:14px;height:1px;background:#808080;"></div>
<div style="left:804px;top:127px;width:1px;height:8px;background:#808080;"></div>
<svg style="left:796px;top:130px" width="5" height="3" viewBox="0 0 5 3" shape-rendering="crispEdges"><path d="M0 0h5v1h-1v1h-1v1h-1v-1h-1v-1h-1z" fill="#000"/></svg>
<span class="t" style="left:532px;top:146px;">Брутто-</span>
<span class="t" style="left:532px;top:159px;">формула</span>
<div style="left:591px;top:145px;width:217px;height:20px;background:#FFFFFF;"></div>
<div style="left:591px;top:145px;width:217px;height:1px;background:#808080;"></div>
<div style="left:591px;top:145px;width:1px;height:20px;background:#808080;"></div>
<div style="left:592px;top:146px;width:215px;height:1px;background:#404040;"></div>
<div style="left:592px;top:146px;width:1px;height:18px;background:#404040;"></div>
<div style="left:591px;top:164px;width:217px;height:1px;background:#FFFFFF;"></div>
<div style="left:807px;top:145px;width:1px;height:20px;background:#FFFFFF;"></div>
<div style="left:592px;top:163px;width:215px;height:1px;background:#D4D0C8;"></div>
<div style="left:806px;top:146px;width:1px;height:18px;background:#D4D0C8;"></div>
<span class="t" style="left:595px;top:149px;">C3H4Cl2</span>
<span class="t" style="left:536px;top:186px;">Синонимы</span>
<div style="left:591px;top:169px;width:217px;height:36px;background:#FFFFFF;"></div>
<div style="left:591px;top:169px;width:217px;height:1px;background:#808080;"></div>
<div style="left:591px;top:169px;width:1px;height:36px;background:#808080;"></div>
<div style="left:592px;top:170px;width:215px;height:1px;background:#404040;"></div>
<div style="left:592px;top:170px;width:1px;height:34px;background:#404040;"></div>
<div style="left:591px;top:204px;width:217px;height:1px;background:#FFFFFF;"></div>
<div style="left:807px;top:169px;width:1px;height:36px;background:#FFFFFF;"></div>
<div style="left:592px;top:203px;width:215px;height:1px;background:#D4D0C8;"></div>
<div style="left:806px;top:170px;width:1px;height:34px;background:#D4D0C8;"></div>
<span class="t" style="left:532px;top:210px;">N по CAS</span>
<div style="left:591px;top:209px;width:217px;height:20px;background:#FFFFFF;"></div>
<div style="left:591px;top:209px;width:217px;height:1px;background:#808080;"></div>
<div style="left:591px;top:209px;width:1px;height:20px;background:#808080;"></div>
<div style="left:592px;top:210px;width:215px;height:1px;background:#404040;"></div>
<div style="left:592px;top:210px;width:1px;height:18px;background:#404040;"></div>
<div style="left:591px;top:228px;width:217px;height:1px;background:#FFFFFF;"></div>
<div style="left:807px;top:209px;width:1px;height:20px;background:#FFFFFF;"></div>
<div style="left:592px;top:227px;width:215px;height:1px;background:#D4D0C8;"></div>
<div style="left:806px;top:210px;width:1px;height:18px;background:#D4D0C8;"></div>
<span class="t" style="left:595px;top:213px;">78-88-6</span>
<div style="left:527px;top:233px;width:288px;height:1px;background:#808080;"></div>
<div style="left:527px;top:233px;width:1px;height:9px;background:#808080;"></div>
<div style="left:527px;top:241px;width:289px;height:1px;background:#FFFFFF;"></div>
<div style="left:815px;top:233px;width:1px;height:9px;background:#FFFFFF;"></div>
<span class="t" style="left:532px;top:248px;">Относительный параметр</span>
<span class="t" style="left:532px;top:261px;">опасности, Xi :</span>
<div style="left:735px;top:249px;width:73px;height:21px;background:#FFFFFF;"></div>
<div style="left:735px;top:249px;width:73px;height:1px;background:#808080;"></div>
<div style="left:735px;top:249px;width:1px;height:21px;background:#808080;"></div>
<div style="left:736px;top:250px;width:71px;height:1px;background:#404040;"></div>
<div style="left:736px;top:250px;width:1px;height:19px;background:#404040;"></div>
<div style="left:735px;top:269px;width:73px;height:1px;background:#FFFFFF;"></div>
<div style="left:807px;top:249px;width:1px;height:21px;background:#FFFFFF;"></div>
<div style="left:736px;top:268px;width:71px;height:1px;background:#D4D0C8;"></div>
<div style="left:806px;top:250px;width:1px;height:19px;background:#D4D0C8;"></div>
<span class="t r" style="left:735px;top:253px;width:69px;text-align:right;">2,2</span>
<span class="t" style="left:532px;top:278px;">Zi = 4Xi/3 - 1/3 :</span>
<div style="left:752px;top:273px;width:56px;height:20px;background:#FFFFFF;"></div>
<div style="left:752px;top:273px;width:56px;height:1px;background:#808080;"></div>
<div style="left:752px;top:273px;width:1px;height:20px;background:#808080;"></div>
<div style="left:753px;top:274px;width:54px;height:1px;background:#404040;"></div>
<div style="left:753px;top:274px;width:1px;height:18px;background:#404040;"></div>
<div style="left:752px;top:292px;width:56px;height:1px;background:#FFFFFF;"></div>
<div style="left:807px;top:273px;width:1px;height:20px;background:#FFFFFF;"></div>
<div style="left:753px;top:291px;width:54px;height:1px;background:#D4D0C8;"></div>
<div style="left:806px;top:274px;width:1px;height:18px;background:#D4D0C8;"></div>
<span class="t r" style="left:752px;top:277px;width:52px;text-align:right;">2,6</span>
<span class="t" style="left:532px;top:293px;">lgWi = 4 - 4/Zi</span>
<span class="t" style="left:635px;top:293px;">для 1 &lt; Zi &lt; 2,</span>
<span class="t" style="left:532px;top:306px;">lgWi = Zi</span>
<span class="t" style="left:636px;top:306px;">для 2 &lt; Zi &lt; 4,</span>
<span class="t" style="left:532px;top:319px;">lgWi = 2 + 4/(6 - Zi)</span>
<span class="t" style="left:635px;top:319px;">для 4 &lt; Zi &lt; 5</span>
<div style="left:752px;top:337px;width:56px;height:20px;background:#FFFFFF;"></div>
<div style="left:752px;top:337px;width:56px;height:1px;background:#808080;"></div>
<div style="left:752px;top:337px;width:1px;height:20px;background:#808080;"></div>
<div style="left:753px;top:338px;width:54px;height:1px;background:#404040;"></div>
<div style="left:753px;top:338px;width:1px;height:18px;background:#404040;"></div>
<div style="left:752px;top:356px;width:56px;height:1px;background:#FFFFFF;"></div>
<div style="left:807px;top:337px;width:1px;height:20px;background:#FFFFFF;"></div>
<div style="left:753px;top:355px;width:54px;height:1px;background:#D4D0C8;"></div>
<div style="left:806px;top:338px;width:1px;height:18px;background:#D4D0C8;"></div>
<span class="t r" style="left:752px;top:341px;width:52px;text-align:right;">2,6</span>
<span class="t" style="left:532px;top:349px;">lgWi :</span>
<span class="t" style="left:532px;top:365px;">Коэффициент степени</span>
<span class="t" style="left:532px;top:378px;">опасности,</span>
<span class="t" style="left:605px;top:378px;">Wi :</span>
<div style="left:752px;top:361px;width:56px;height:21px;background:#FFFFFF;"></div>
<div style="left:752px;top:361px;width:56px;height:1px;background:#808080;"></div>
<div style="left:752px;top:361px;width:1px;height:21px;background:#808080;"></div>
<div style="left:753px;top:362px;width:54px;height:1px;background:#404040;"></div>
<div style="left:753px;top:362px;width:1px;height:19px;background:#404040;"></div>
<div style="left:752px;top:381px;width:56px;height:1px;background:#FFFFFF;"></div>
<div style="left:807px;top:361px;width:1px;height:21px;background:#FFFFFF;"></div>
<div style="left:753px;top:380px;width:54px;height:1px;background:#D4D0C8;"></div>
<div style="left:806px;top:362px;width:1px;height:19px;background:#D4D0C8;"></div>
<span class="t r" style="left:752px;top:365px;width:52px;text-align:right;">398,107</span>
<span class="t" style="left:532px;top:399px;">Код НМД :</span>
<div style="left:752px;top:393px;width:56px;height:21px;background:#FFFFFF;"></div>
<div style="left:752px;top:393px;width:56px;height:1px;background:#808080;"></div>
<div style="left:752px;top:393px;width:1px;height:21px;background:#808080;"></div>
<div style="left:753px;top:394px;width:54px;height:1px;background:#404040;"></div>
<div style="left:753px;top:394px;width:1px;height:19px;background:#404040;"></div>
<div style="left:752px;top:413px;width:56px;height:1px;background:#FFFFFF;"></div>
<div style="left:807px;top:393px;width:1px;height:21px;background:#FFFFFF;"></div>
<div style="left:753px;top:412px;width:54px;height:1px;background:#D4D0C8;"></div>
<div style="left:806px;top:394px;width:1px;height:19px;background:#D4D0C8;"></div>
<span class="t" style="left:755px;top:397px;letter-spacing:-0.35px;">30207010</span>
<div style="left:818px;top:396px;width:23px;height:22px;background:#D4D0C8;"></div>
<div style="left:818px;top:396px;width:23px;height:1px;background:#FFFFFF;"></div>
<div style="left:818px;top:396px;width:1px;height:22px;background:#FFFFFF;"></div>
<div style="left:818px;top:417px;width:23px;height:1px;background:#404040;"></div>
<div style="left:840px;top:396px;width:1px;height:22px;background:#404040;"></div>
<div style="left:819px;top:416px;width:21px;height:1px;background:#808080;"></div>
<div style="left:839px;top:397px;width:1px;height:20px;background:#808080;"></div>
<svg style="left:822px;top:400px" width="16" height="14" viewBox="0 0 16 14" shape-rendering="crispEdges"><rect x="14" y="0" width="2" height="1" fill="#000000"/><rect x="14" y="1" width="2" height="1" fill="#000000"/><rect x="4" y="3" width="3" height="1" fill="#000000"/><rect x="14" y="3" width="2" height="1" fill="#000000"/><rect x="3" y="4" width="1" height="1" fill="#000000"/><rect x="4" y="4" width="3" height="1" fill="#FFFF80"/><rect x="7" y="4" width="6" height="1" fill="#000000"/><rect x="14" y="4" width="2" height="1" fill="#000000"/><rect x="0" y="5" width="1" height="1" fill="#40C0C0"/><rect x="1" y="5" width="2" height="1" fill="#000000"/><rect x="3" y="5" width="3" height="1" fill="#FFFF80"/><rect x="6" y="5" width="1" height="1" fill="#000000"/><rect x="7" y="5" width="6" height="1" fill="#FFFFFF"/><rect x="13" y="5" width="1" height="1" fill="#000000"/><rect x="0" y="6" width="1" height="1" fill="#40C0C0"/><rect x="1" y="6" width="1" height="1" fill="#000000"/><rect x="2" y="6" width="4" height="1" fill="#FFFF80"/><rect x="6" y="6" width="8" height="1" fill="#000000"/><rect x="14" y="6" width="2" height="1" fill="#E00000"/><rect x="0" y="7" width="1" height="1" fill="#40C0C0"/><rect x="1" y="7" width="1" height="1" fill="#000000"/><rect x="2" y="7" width="6" height="1" fill="#FFFF80"/><rect x="8" y="7" width="1" height="1" fill="#000000"/><rect x="14" y="7" width="2" height="1" fill="#E00000"/><rect x="0" y="8" width="1" height="1" fill="#40C0C0"/><rect x="1" y="8" width="1" height="1" fill="#000000"/><rect x="2" y="8" width="4" height="1" fill="#FFFF80"/><rect x="6" y="8" width="3" height="1" fill="#000000"/><rect x="0" y="9" width="1" height="1" fill="#40C0C0"/><rect x="1" y="9" width="1" height="1" fill="#000000"/><rect x="2" y="9" width="5" height="1" fill="#FFFF80"/><rect x="7" y="9" width="1" height="1" fill="#000000"/><rect x="14" y="9" width="2" height="1" fill="#000000"/><rect x="0" y="10" width="1" height="1" fill="#40C0C0"/><rect x="1" y="10" width="1" height="1" fill="#000000"/><rect x="2" y="10" width="4" height="1" fill="#FFFF80"/><rect x="6" y="10" width="2" height="1" fill="#000000"/><rect x="14" y="10" width="2" height="1" fill="#000000"/><rect x="2" y="11" width="1" height="1" fill="#000000"/><rect x="3" y="11" width="4" height="1" fill="#FFFF80"/><rect x="7" y="11" width="1" height="1" fill="#000000"/><rect x="3" y="12" width="4" height="1" fill="#000000"/><rect x="14" y="12" width="2" height="1" fill="#000000"/><rect x="14" y="13" width="2" height="1" fill="#000000"/></svg>
<div style="left:526px;top:553px;width:348px;height:39px;background:#D4D0C8;"></div>
<div style="left:526px;top:553px;width:348px;height:1px;background:#808080;"></div>
<div style="left:526px;top:553px;width:1px;height:39px;background:#808080;"></div>
<div style="left:527px;top:554px;width:346px;height:1px;background:#404040;"></div>
<div style="left:527px;top:554px;width:1px;height:37px;background:#404040;"></div>
<div style="left:526px;top:591px;width:348px;height:1px;background:#FFFFFF;"></div>
<div style="left:873px;top:553px;width:1px;height:39px;background:#FFFFFF;"></div>
<div style="left:527px;top:590px;width:346px;height:1px;background:#D4D0C8;"></div>
<div style="left:872px;top:554px;width:1px;height:37px;background:#D4D0C8;"></div>
<span class="t" style="left:529px;top:557px;">Приказ МПР России от 15.06.2001 № 511 &#39;&#39;Об утверждении</span>
<span class="t" style="left:529px;top:570px;">Критериев отнесения опасных отходов к классу опасности для</span>
<div style="left:857px;top:556px;width:15px;height:34px;background:repeating-conic-gradient(#fff 0 25%,#D4D0C8 0 50%) 0 0/2px 2px;"></div>
<div style="left:857px;top:556px;width:15px;height:15px;background:#D4D0C8;"></div>
<div style="left:857px;top:556px;width:15px;height:1px;background:#FFFFFF;"></div>
<div style="left:857px;top:556px;width:1px;height:15px;background:#FFFFFF;"></div>
<div style="left:857px;top:570px;width:15px;height:1px;background:#404040;"></div>
<div style="left:871px;top:556px;width:1px;height:15px;background:#404040;"></div>
<div style="left:858px;top:569px;width:13px;height:1px;background:#808080;"></div>
<div style="left:870px;top:557px;width:1px;height:13px;background:#808080;"></div>
<svg style="left:860px;top:561px" width="8" height="5" viewBox="0 0 8 5" shape-rendering="crispEdges"><path d="M3 0h1v1h1v1h1v1h1v1h-7v-1h1v-1h1v-1h1z" fill="#000"/></svg>
<div style="left:857px;top:575px;width:15px;height:15px;background:#D4D0C8;"></div>
<div style="left:857px;top:575px;width:15px;height:1px;background:#FFFFFF;"></div>
<div style="left:857px;top:575px;width:1px;height:15px;background:#FFFFFF;"></div>
<div style="left:857px;top:589px;width:15px;height:1px;background:#404040;"></div>
<div style="left:871px;top:575px;width:1px;height:15px;background:#404040;"></div>
<div style="left:858px;top:588px;width:13px;height:1px;background:#808080;"></div>
<div style="left:870px;top:576px;width:1px;height:13px;background:#808080;"></div>
<svg style="left:860px;top:580px" width="8" height="5" viewBox="0 0 8 5" shape-rendering="crispEdges"><path d="M0 0h7v1h-1v1h-1v1h-1v1h-1v-1h-1v-1h-1v-1h-1z" fill="#000"/></svg>
<div style="left:4px;top:598px;width:876px;height:1px;background:#FFFFFF;"></div>
<div style="left:4px;top:600px;width:776px;height:1px;background:#808080;"></div>
<div style="left:4px;top:600px;width:1px;height:17px;background:#808080;"></div>
<div style="left:4px;top:616px;width:776px;height:1px;background:#FFFFFF;"></div>
<div style="left:779px;top:600px;width:1px;height:17px;background:#FFFFFF;"></div>
<div style="left:782px;top:600px;width:98px;height:1px;background:#808080;"></div>
<div style="left:782px;top:600px;width:1px;height:17px;background:#808080;"></div>
<div style="left:782px;top:616px;width:98px;height:1px;background:#FFFFFF;"></div>
<div style="left:879px;top:600px;width:1px;height:17px;background:#FFFFFF;"></div>
<span class="t" style="left:694px;top:603px;">Всего записей</span>
<span class="t" style="left:825px;top:603px;">39</span>
<svg style="left:867px;top:604px" width="12" height="12" viewBox="0 0 12 12" shape-rendering="crispEdges"><rect x="10" y="1" width="1" height="1" fill="#808080"/><rect x="11" y="1" width="1" height="1" fill="#FFFFFF"/><rect x="9" y="2" width="2" height="1" fill="#808080"/><rect x="11" y="2" width="1" height="1" fill="#FFFFFF"/><rect x="8" y="3" width="2" height="1" fill="#808080"/><rect x="10" y="3" width="1" height="1" fill="#FFFFFF"/><rect x="7" y="4" width="2" height="1" fill="#808080"/><rect x="9" y="4" width="1" height="1" fill="#FFFFFF"/><rect x="11" y="4" width="1" height="1" fill="#808080"/><rect x="6" y="5" width="2" height="1" fill="#808080"/><rect x="8" y="5" width="1" height="1" fill="#FFFFFF"/><rect x="10" y="5" width="2" height="1" fill="#808080"/><rect x="5" y="6" width="2" height="1" fill="#808080"/><rect x="7" y="6" width="1" height="1" fill="#FFFFFF"/><rect x="9" y="6" width="2" height="1" fill="#808080"/><rect x="11" y="6" width="1" height="1" fill="#FFFFFF"/><rect x="4" y="7" width="2" height="1" fill="#808080"/><rect x="6" y="7" width="1" height="1" fill="#FFFFFF"/><rect x="8" y="7" width="2" height="1" fill="#808080"/><rect x="10" y="7" width="1" height="1" fill="#FFFFFF"/><rect x="3" y="8" width="2" height="1" fill="#808080"/><rect x="5" y="8" width="1" height="1" fill="#FFFFFF"/><rect x="7" y="8" width="2" height="1" fill="#808080"/><rect x="9" y="8" width="1" height="1" fill="#FFFFFF"/><rect x="11" y="8" width="1" height="1" fill="#808080"/><rect x="2" y="9" width="2" height="1" fill="#808080"/><rect x="4" y="9" width="1" height="1" fill="#FFFFFF"/><rect x="6" y="9" width="2" height="1" fill="#808080"/><rect x="8" y="9" width="1" height="1" fill="#FFFFFF"/><rect x="10" y="9" width="2" height="1" fill="#808080"/><rect x="1" y="10" width="2" height="1" fill="#808080"/><rect x="3" y="10" width="1" height="1" fill="#FFFFFF"/><rect x="5" y="10" width="2" height="1" fill="#808080"/><rect x="7" y="10" width="1" height="1" fill="#FFFFFF"/><rect x="9" y="10" width="2" height="1" fill="#808080"/><rect x="11" y="10" width="1" height="1" fill="#FFFFFF"/></svg>
</body></html>
